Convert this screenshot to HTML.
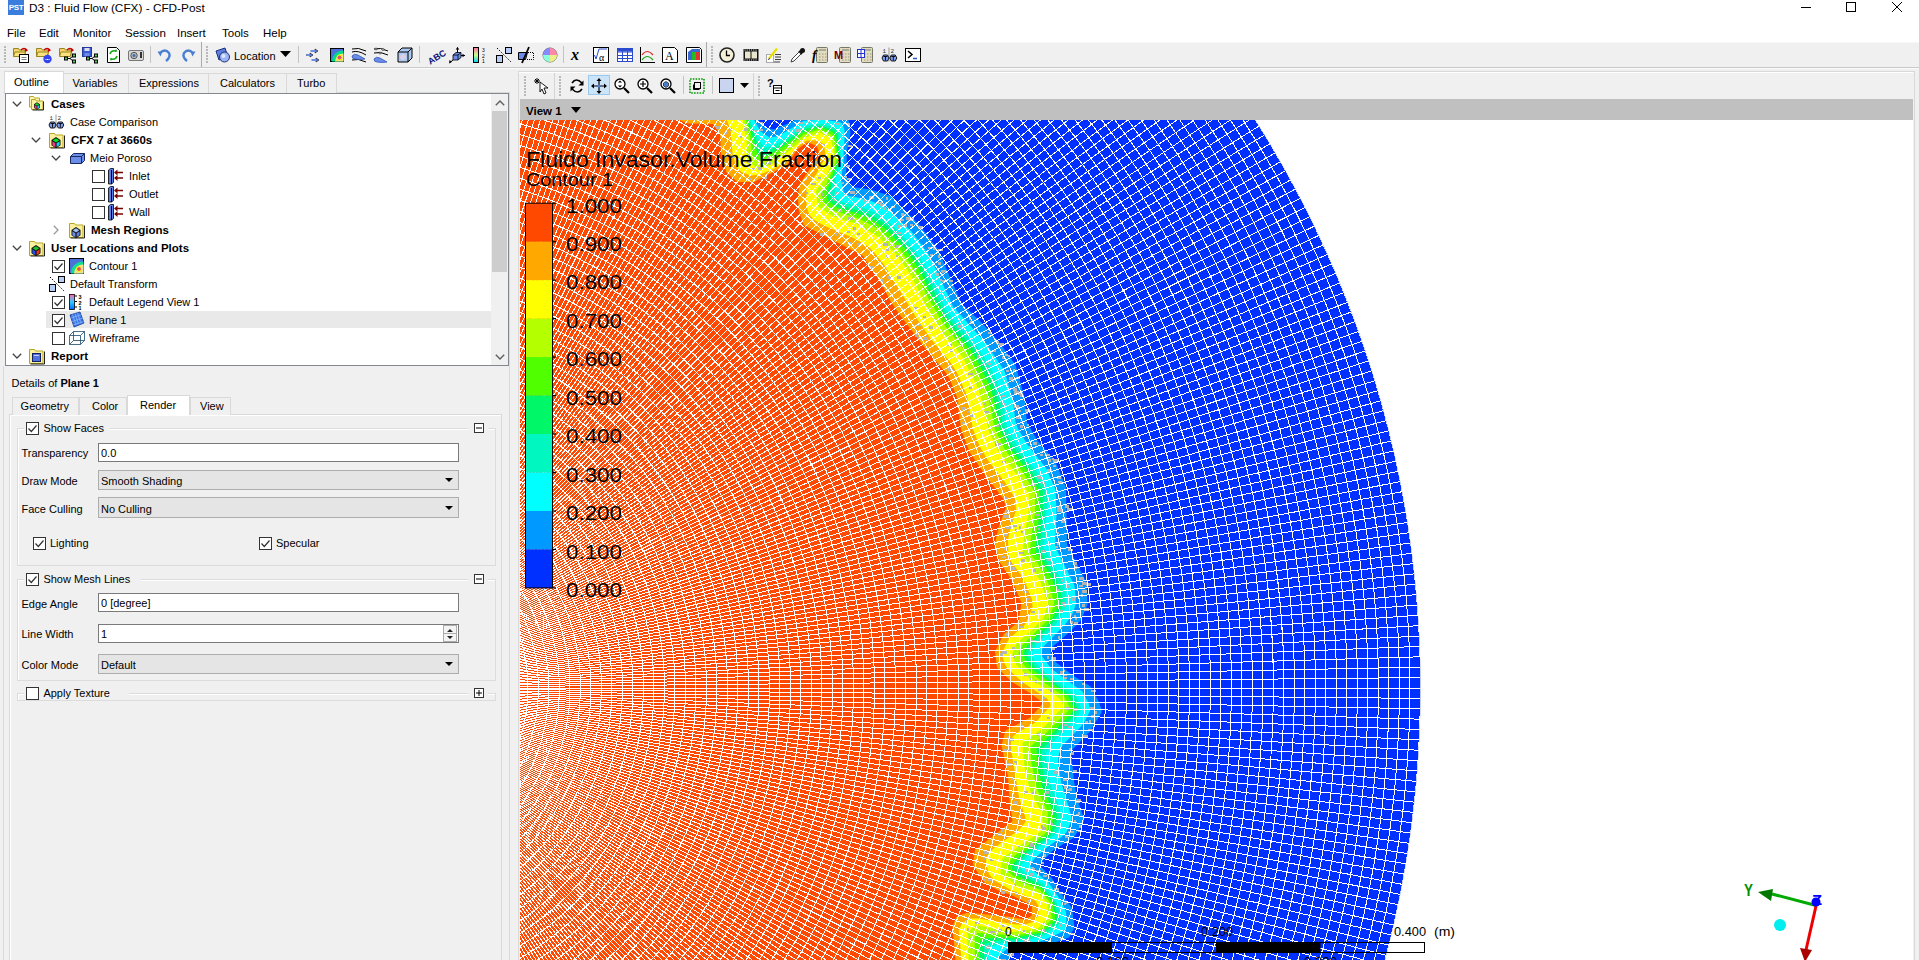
<!DOCTYPE html><html><head><meta charset="utf-8"><style>
html,body{margin:0;padding:0}
body{width:1919px;height:960px;overflow:hidden;position:relative;background:#f0f0f0;font-family:"Liberation Sans",sans-serif;font-size:11px;color:#000}
.t{position:absolute;white-space:nowrap}
</style></head><body>
<div style="position:absolute;left:0;top:0;width:1919px;height:42px;background:#fff"></div>
<div style="position:absolute;left:8px;top:0;width:16px;height:15px;background:#3b7ddd"></div>
<div class="t" style="left:8px;top:3px;width:16px;font-size:8px;line-height:9px;color:#fff;font-weight:bold;text-align:center;letter-spacing:-0.3px">PST</div>
<div class="t" style="left:29px;top:2.8px;font-size:11.8px;line-height:11.8px;font-weight:normal;color:#000;">D3 : Fluid Flow (CFX) - CFD-Post</div>
<svg style="position:absolute;left:1790px;top:0" width="129" height="16"><path d="M11 7.5h10" stroke="#000" stroke-width="1"/><rect x="1846.5" y="2.5" width="9" height="9" fill="none" stroke="#000" transform="translate(-1790,0)"/><path d="M102 2l10 10M112 2l-10 10" stroke="#000" stroke-width="1"/></svg>
<div class="t" style="left:7px;top:28.3px;font-size:11.5px;line-height:11.5px;font-weight:normal;color:#000;">File</div>
<div class="t" style="left:39px;top:28.3px;font-size:11.5px;line-height:11.5px;font-weight:normal;color:#000;">Edit</div>
<div class="t" style="left:73px;top:28.3px;font-size:11.5px;line-height:11.5px;font-weight:normal;color:#000;">Monitor</div>
<div class="t" style="left:125px;top:28.3px;font-size:11.5px;line-height:11.5px;font-weight:normal;color:#000;">Session</div>
<div class="t" style="left:177px;top:28.3px;font-size:11.5px;line-height:11.5px;font-weight:normal;color:#000;">Insert</div>
<div class="t" style="left:222px;top:28.3px;font-size:11.5px;line-height:11.5px;font-weight:normal;color:#000;">Tools</div>
<div class="t" style="left:263px;top:28.3px;font-size:11.5px;line-height:11.5px;font-weight:normal;color:#000;">Help</div>
<div style="position:absolute;left:0;top:42px;width:1919px;height:25px;background:#f0f0f0;border-top:1px solid #f8f8f8"></div>
<div style="position:absolute;left:0;top:67px;width:1919px;height:1px;background:#c9c9c9"></div>
<div style="position:absolute;left:0;top:68px;width:1919px;height:1px;background:#fbfbfb"></div>
<div style="position:absolute;left:4px;top:46px;width:2px;height:2px;background:#b9b9b9"></div><div style="position:absolute;left:4px;top:49px;width:2px;height:2px;background:#b9b9b9"></div><div style="position:absolute;left:4px;top:52px;width:2px;height:2px;background:#b9b9b9"></div><div style="position:absolute;left:4px;top:55px;width:2px;height:2px;background:#b9b9b9"></div><div style="position:absolute;left:4px;top:58px;width:2px;height:2px;background:#b9b9b9"></div><div style="position:absolute;left:4px;top:61px;width:2px;height:2px;background:#b9b9b9"></div><svg style="position:absolute;left:13px;top:47px;overflow:visible" width="16" height="16" viewBox="0 0 16 16"><path d="M0.5 1.5h5l1 1.5h5.5v6h-11.5z" fill="#f3d36b" stroke="#9a8420"/><path d="M0.5 9.5l1.5-4.5h10.5l-1.5 4.5z" fill="#fbe27f" stroke="#9a8420"/><path d="M8 3q3-3 6 0" fill="none" stroke="#c00" stroke-width="1.5"/><path d="M12 1.5l3 2l-3 1.5z" fill="#c00"/><rect x="6.5" y="7.5" width="9" height="8" fill="#fff" stroke="#000"/><path d="M8.5 10.5h5M8.5 12.5h5" stroke="#444" stroke-width="0.7"/></svg><svg style="position:absolute;left:36px;top:47px;overflow:visible" width="16" height="16" viewBox="0 0 16 16"><path d="M0.5 1.5h5l1 1.5h5.5v6h-11.5z" fill="#f3d36b" stroke="#9a8420"/><path d="M0.5 9.5l1.5-4.5h10.5l-1.5 4.5z" fill="#fbe27f" stroke="#9a8420"/><path d="M8 3q3-3 6 0" fill="none" stroke="#c00" stroke-width="1.5"/><path d="M12 1.5l3 2l-3 1.5z" fill="#c00"/><circle cx="11.5" cy="12" r="4.2" fill="#3344ee"/><path d="M9.5 12.5h1M11 12.5h1M12.5 12.5h1" stroke="#fff"/></svg><svg style="position:absolute;left:59px;top:47px;overflow:visible" width="16" height="16" viewBox="0 0 16 16"><path d="M0.5 1.5h5l1 1.5h5.5v6h-11.5z" fill="#f3d36b" stroke="#9a8420"/><path d="M0.5 9.5l1.5-4.5h10.5l-1.5 4.5z" fill="#fbe27f" stroke="#9a8420"/><path d="M8 3q3-3 6 0" fill="none" stroke="#c00" stroke-width="1.5"/><path d="M12 1.5l3 2l-3 1.5z" fill="#c00"/><g transform="translate(5,8)"><path d="M2 3.5h4M6 3.5l3-2.5M6 3.5l3 2.5" stroke="#000" fill="none"/><rect x="0.5" y="2" width="3" height="3" fill="#5c5" stroke="#000"/><rect x="8.5" y="-1" width="3" height="3" fill="#5c5" stroke="#000"/><rect x="8.5" y="5" width="3" height="3" fill="#5c5" stroke="#000"/></g></svg><svg style="position:absolute;left:82px;top:47px;overflow:visible" width="16" height="16" viewBox="0 0 16 16"><rect x="0.5" y="0.5" width="9" height="9" fill="#3b5bd6" stroke="#223a9a"/><rect x="2.5" y="1" width="5" height="3" fill="#dde"/><rect x="2.5" y="6" width="5" height="3.5" fill="#6a8be8"/><g transform="translate(4,8)"><path d="M2 3.5h4M6 3.5l3-2.5M6 3.5l3 2.5" stroke="#000" fill="none"/><rect x="0.5" y="2" width="3" height="3" fill="#5c5" stroke="#000"/><rect x="8.5" y="-1" width="3" height="3" fill="#5c5" stroke="#000"/><rect x="8.5" y="5" width="3" height="3" fill="#5c5" stroke="#000"/></g></svg><svg style="position:absolute;left:106px;top:47px;overflow:visible" width="16" height="16" viewBox="0 0 16 16"><path d="M1.5 0.5h9l3 3v12h-12z" fill="#fff" stroke="#000"/><path d="M4 7q1-4 6-3" fill="none" stroke="#2a2" stroke-width="1.6"/><path d="M10 2l1.5 2.5l-3 .5z" fill="#2a2"/><path d="M11 9q-1 4-6 3" fill="none" stroke="#2a2" stroke-width="1.6"/><path d="M5 14l-1.5-2.5l3-.5z" fill="#2a2"/></svg><svg style="position:absolute;left:128px;top:47px;overflow:visible" width="16" height="16" viewBox="0 0 16 16"><rect x="0.5" y="3.5" width="15" height="10" rx="1.5" fill="#d8d8d8" stroke="#777"/><circle cx="6" cy="8.5" r="3.2" fill="#bbb" stroke="#555"/><circle cx="6" cy="8.5" r="1.5" fill="#3a6ab0"/><rect x="12" y="5" width="2" height="6" fill="#333"/></svg><div style="position:absolute;left:150px;top:46px;width:1px;height:17px;background:#c4c4c4"></div><svg style="position:absolute;left:157px;top:47px;overflow:visible" width="16" height="16" viewBox="0 0 16 16"><path d="M3 6q5-5 9 0q2 4-3 8" fill="none" stroke="#4a7fd4" stroke-width="2.4"/><path d="M0.5 4.5l5 0l-2 5z" fill="#4a7fd4"/></svg><svg style="position:absolute;left:180px;top:47px;overflow:visible" width="16" height="16" viewBox="0 0 16 16"><path d="M13 6q-5-5-9 0q-2 4 3 8" fill="none" stroke="#4a7fd4" stroke-width="2.4"/><path d="M15.5 4.5l-5 0l2 5z" fill="#4a7fd4"/></svg><div style="position:absolute;left:201px;top:42px;width:1px;height:25px;background:#a9a9a9"></div><div style="position:absolute;left:206px;top:46px;width:2px;height:2px;background:#b9b9b9"></div><div style="position:absolute;left:206px;top:49px;width:2px;height:2px;background:#b9b9b9"></div><div style="position:absolute;left:206px;top:52px;width:2px;height:2px;background:#b9b9b9"></div><div style="position:absolute;left:206px;top:55px;width:2px;height:2px;background:#b9b9b9"></div><div style="position:absolute;left:206px;top:58px;width:2px;height:2px;background:#b9b9b9"></div><div style="position:absolute;left:206px;top:61px;width:2px;height:2px;background:#b9b9b9"></div><svg style="position:absolute;left:215px;top:47px;overflow:visible" width="16" height="16" viewBox="0 0 16 16"><path d="M1 4l9-3l3 9l-9 3z" fill="#5c7fe0" stroke="#1a2f80"/><circle cx="9.5" cy="10" r="5" fill="#9ab4f4" stroke="#203070"/><circle cx="8.5" cy="9" r="2" fill="#dde6fb"/></svg><div class="t" style="left:234px;top:50px;font-size:11px;line-height:13px;color:#000">Location</div><svg style="position:absolute;left:280px;top:51px" width="12" height="7"><path d="M0 0h11l-5.5 6z" fill="#000"/></svg><div style="position:absolute;left:298px;top:46px;width:1px;height:17px;background:#c4c4c4"></div><svg style="position:absolute;left:305px;top:47px;overflow:visible" width="16" height="16" viewBox="0 0 16 16"><path d="M1 8h5M6 4h5M7 13h5" stroke="#000" stroke-width="1"/><path d="M5 6l3 2l-3 2zM10 2l3 2l-3 2zM11 11l3 2l-3 2z" fill="#6a8ee8" stroke="#000" stroke-width="0.6"/><path d="M1.5 7h4v2h-4zM5.5 3h5v2h-5zM6.5 12h5v2h-5z" fill="#6a8ee8"/></svg><svg style="position:absolute;left:329px;top:47px;overflow:visible" width="16" height="16" viewBox="0 0 16 16"><rect x="1.5" y="1.5" width="13" height="13" fill="#4a72d8" stroke="#000"/><path d="M3 14.5a11 11 0 0 1 11.5-11v11z" fill="#0d8"/><path d="M6 14.5a8 8 0 0 1 8.5-8v8z" fill="#f0e080"/><circle cx="10.5" cy="10.5" r="2.5" fill="#e05070" stroke="#ff0"/></svg><svg style="position:absolute;left:351px;top:47px;overflow:visible" width="16" height="16" viewBox="0 0 16 16"><path d="M1 2q6-2 14 2M1 13q6-2 14 2M1 5q6-2 14 3" fill="none" stroke="#000"/><path d="M1 9q2-3 6-1l7 4q-5 1-10 0q-3 0-3-3z" fill="#6a8ee8" stroke="#2a4ab0" stroke-width="0.7"/></svg><svg style="position:absolute;left:373px;top:47px;overflow:visible" width="16" height="16" viewBox="0 0 16 16"><path d="M1 2q6-2 14 2M1 6q6-2 14 2" fill="none" stroke="#000"/><circle cx="3" cy="2" r="1" fill="#fff" stroke="#000" stroke-width="0.6"/><circle cx="10" cy="2.5" r="1" fill="#fff" stroke="#000" stroke-width="0.6"/><circle cx="7" cy="6" r="1" fill="#fff" stroke="#000" stroke-width="0.6"/><path d="M1 12q2-3 6-1l7 4q-5 1-10 0q-3 0-3-3z" fill="#6a8ee8" stroke="#2a4ab0" stroke-width="0.7"/></svg><svg style="position:absolute;left:397px;top:47px;overflow:visible" width="16" height="16" viewBox="0 0 16 16"><path d="M1 5l4-4h10v10l-4 4h-10z" fill="#aac8f0" stroke="#000"/><path d="M1 5h10v10M11 5l4-4" fill="none" stroke="#000"/><circle cx="6" cy="10" r="3" fill="#f0d0e0" opacity="0.7"/></svg><div style="position:absolute;left:419px;top:46px;width:1px;height:17px;background:#c4c4c4"></div><svg style="position:absolute;left:425px;top:47px;overflow:visible" width="16" height="16" viewBox="0 0 16 16"><text x="1" y="15" font-family="Liberation Sans" font-weight="bold" font-size="9" fill="#14147a" transform="rotate(-32 8 9)">ABC</text></svg><svg style="position:absolute;left:449px;top:47px;overflow:visible" width="16" height="16" viewBox="0 0 16 16"><path d="M4 8l3-2.5h5v5l-3 2.5h-5z" fill="#6a8ee8" stroke="#000" stroke-width="0.8"/><path d="M4 8h5v5M9 8l3-2.5" fill="none" stroke="#000" stroke-width="0.8"/><path d="M8.5 5.5v-5M12 8.5h4M4 13l-3.5 3" stroke="#000"/><path d="M8.5 0l-1.8 2.5h3.6zM16 8.5l-2.5-1.8v3.6zM0 16l.6-3l2.4 2z" fill="#000"/></svg><svg style="position:absolute;left:472px;top:47px;overflow:visible" width="16" height="16" viewBox="0 0 16 16"><defs><linearGradient id="lg1" x1="0" y1="0" x2="0" y2="1"><stop offset="0" stop-color="#f6a"/><stop offset=".5" stop-color="#cf8"/><stop offset="1" stop-color="#0cf"/></linearGradient></defs><rect x="1.5" y="0.5" width="5" height="15" fill="url(#lg1)" stroke="#000"/><text x="10" y="5" font-size="5" font-family="Liberation Sans">3</text><text x="10" y="10.5" font-size="5" font-family="Liberation Sans">2</text><text x="10" y="16" font-size="5" font-family="Liberation Sans">1</text></svg><svg style="position:absolute;left:496px;top:47px;overflow:visible" width="16" height="16" viewBox="0 0 16 16"><rect x="0.5" y="8.5" width="6" height="7" fill="#b8cdf5" stroke="#000"/><rect x="9.5" y="0.5" width="6" height="6" fill="#b8cdf5" stroke="#000"/><path d="M1 1l14 14" stroke="#000" stroke-dasharray="1.5 1.5"/></svg><svg style="position:absolute;left:518px;top:47px;overflow:visible" width="16" height="16" viewBox="0 0 16 16"><path d="M8 5.5h7.5v7h-7.5" fill="none" stroke="#000" stroke-dasharray="1 1"/><path d="M0.5 5.5h9l-2 7h-7z" fill="#6a8ee8" stroke="#000"/><path d="M11 0l-7 16" stroke="#000" stroke-width="1.8"/></svg><svg style="position:absolute;left:542px;top:47px;overflow:visible" width="16" height="16" viewBox="0 0 16 16"><circle cx="8" cy="8" r="7" fill="#8ed" stroke="#666"/><path d="M8 8L8 1A7 7 0 0 1 15 8z" fill="#f8a"/><path d="M8 8L15 8A7 7 0 0 1 8 15z" fill="#ee8"/><path d="M8 8L8 15A7 7 0 0 1 1 8z" fill="#8fd"/><path d="M8 8L1 8A7 7 0 0 1 8 1z" fill="#88f"/></svg><div style="position:absolute;left:563px;top:46px;width:1px;height:17px;background:#c4c4c4"></div><svg style="position:absolute;left:570px;top:47px;overflow:visible" width="16" height="16" viewBox="0 0 16 16"><text x="1" y="13" font-family="Liberation Serif" font-style="italic" font-weight="bold" font-size="16" fill="#000">x</text></svg><svg style="position:absolute;left:593px;top:47px;overflow:visible" width="16" height="16" viewBox="0 0 16 16"><rect x="0.5" y="0.5" width="15" height="15" fill="#fff" stroke="#000"/><path d="M1.5 8l1.5 4l3-10h8" fill="none" stroke="#2a4ad0"/><text x="6" y="13.5" font-family="Liberation Serif" font-size="10" fill="#000">α</text></svg><svg style="position:absolute;left:617px;top:47px;overflow:visible" width="16" height="16" viewBox="0 0 16 16"><rect x="0.5" y="1.5" width="15" height="13" fill="#fff" stroke="#2a4ad0"/><path d="M0.5 5h15M0.5 8.5h15M0.5 11.5h15M5.5 1.5v13M10.5 1.5v13" stroke="#2a4ad0"/><rect x="0.5" y="1.5" width="15" height="3" fill="#2a4ad0"/></svg><svg style="position:absolute;left:639px;top:47px;overflow:visible" width="16" height="16" viewBox="0 0 16 16"><path d="M1.5 0v15.5h14.5" fill="none" stroke="#000"/><path d="M3 8q5-7 11 0" fill="none" stroke="#d33" stroke-width="1.2"/><path d="M3 13q5-7 11 0" fill="none" stroke="#2a2" stroke-width="1.2"/></svg><svg style="position:absolute;left:662px;top:47px;overflow:visible" width="16" height="16" viewBox="0 0 16 16"><path d="M0.5 0.5h12l3 3v12h-15z" fill="#fff" stroke="#000"/><text x="3" y="13" font-family="Liberation Serif" font-size="12" fill="#000">A</text></svg><svg style="position:absolute;left:686px;top:47px;overflow:visible" width="16" height="16" viewBox="0 0 16 16"><path d="M0.5 0.5h13l2 2v13h-15z" fill="#fff" stroke="#000"/><path d="M2 5l4-3h8v8l-4 3h-8z" fill="#3a6ad0"/><path d="M6 5h8v8h-8z" fill="#2b2"/><path d="M10 5h4v8h-4z" fill="#d33"/></svg><div style="position:absolute;left:706px;top:42px;width:1px;height:25px;background:#a9a9a9"></div><div style="position:absolute;left:711px;top:46px;width:2px;height:2px;background:#b9b9b9"></div><div style="position:absolute;left:711px;top:49px;width:2px;height:2px;background:#b9b9b9"></div><div style="position:absolute;left:711px;top:52px;width:2px;height:2px;background:#b9b9b9"></div><div style="position:absolute;left:711px;top:55px;width:2px;height:2px;background:#b9b9b9"></div><div style="position:absolute;left:711px;top:58px;width:2px;height:2px;background:#b9b9b9"></div><div style="position:absolute;left:711px;top:61px;width:2px;height:2px;background:#b9b9b9"></div><svg style="position:absolute;left:719px;top:47px;overflow:visible" width="16" height="16" viewBox="0 0 16 16"><circle cx="8" cy="8" r="7" fill="#f4efd8" stroke="#222" stroke-width="1.6"/><path d="M7.5 3.5v5h3.5" fill="none" stroke="#000" stroke-width="1.3"/></svg><svg style="position:absolute;left:743px;top:47px;overflow:visible" width="16" height="16" viewBox="0 0 16 16"><rect x="0.5" y="2" width="15" height="12" fill="#111"/><rect x="2" y="4.5" width="5.5" height="7" fill="#e8e6cc"/><rect x="8.5" y="4.5" width="5.5" height="7" fill="#e8e6cc"/><path d="M1.5 3h13M1.5 13h13" stroke="#fff" stroke-dasharray="1 1.2"/></svg><svg style="position:absolute;left:766px;top:47px;overflow:visible" width="16" height="16" viewBox="0 0 16 16"><rect x="0.5" y="7.5" width="7" height="8" fill="#fff" stroke="#aaa"/><path d="M3 11.5l8-10" stroke="#e8e000" stroke-width="2.2"/><path d="M2.5 13l1-2" stroke="#333" stroke-width="1"/><path d="M9 7.5h6M9 10h6M9 12.5h6M8 15h6" stroke="#111" stroke-width="0.8"/></svg><svg style="position:absolute;left:790px;top:47px;overflow:visible" width="16" height="16" viewBox="0 0 16 16"><path d="M1 15l1-3l8-8l2 2l-8 8z" fill="#fff" stroke="#444"/><circle cx="12.5" cy="3.5" r="2.5" fill="#111"/><path d="M9 4l3 3" stroke="#111" stroke-width="2"/></svg><svg style="position:absolute;left:812px;top:47px;overflow:visible" width="16" height="16" viewBox="0 0 16 16"><rect x="4.5" y="0.5" width="11" height="15" rx="1" fill="#e3dbbe" stroke="#776"/><path d="M7 3h7" stroke="#aa9" stroke-width="2"/><path d="M7 7h1.5M10 7h1.5M13 7h1.5M7 10h1.5M10 10h1.5M13 10h1.5M7 13h1.5M10 13h1.5M13 13h1.5" stroke="#998"/><text x="0" y="13" font-family="Liberation Serif" font-style="italic" font-weight="bold" font-size="14" fill="#000">f</text></svg><svg style="position:absolute;left:835px;top:47px;overflow:visible" width="16" height="16" viewBox="0 0 16 16"><rect x="4.5" y="0.5" width="11" height="15" rx="1" fill="#e3dbbe" stroke="#776"/><path d="M7 3h7" stroke="#aa9" stroke-width="2"/><path d="M7 7h1.5M10 7h1.5M13 7h1.5M7 10h1.5M10 10h1.5M13 10h1.5M7 13h1.5M10 13h1.5M13 13h1.5" stroke="#998"/><text x="-1" y="12" font-family="Liberation Sans" font-weight="bold" font-size="11" fill="#700">M</text></svg><svg style="position:absolute;left:857px;top:47px;overflow:visible" width="16" height="16" viewBox="0 0 16 16"><rect x="4.5" y="0.5" width="11" height="15" rx="1" fill="#e3dbbe" stroke="#776"/><path d="M7 3h7" stroke="#aa9" stroke-width="2"/><path d="M7 7h1.5M10 7h1.5M13 7h1.5M7 10h1.5M10 10h1.5M13 10h1.5M7 13h1.5M10 13h1.5M13 13h1.5" stroke="#998"/><rect x="0.5" y="2.5" width="7" height="8" fill="#fff" stroke="#2233cc"/><path d="M0.5 6.5h7M4 2.5v8" stroke="#2233cc"/></svg><svg style="position:absolute;left:881px;top:47px;overflow:visible" width="16" height="16" viewBox="0 0 16 16"><text x="1.5" y="5.5" font-size="6" font-family="Liberation Mono" fill="#333">1</text><text x="9.5" y="5.5" font-size="6" font-family="Liberation Mono" fill="#333">2</text><path d="M8 0.5v14" stroke="#999"/><path d="M1 11l1.5-3h4l1.5 3l-1.5 3h-4z" fill="#7fa0f0" stroke="#000" stroke-width="0.9"/><path d="M8.8 11l1.5-3h4l1.5 3l-1.5 3h-4z" fill="#7fa0f0" stroke="#000" stroke-width="0.9"/><path d="M2.5 9.5h4M4.5 9.5v4M10.3 9.5h4M12.3 9.5v4" stroke="#000" stroke-width="0.9"/></svg><svg style="position:absolute;left:905px;top:47px;overflow:visible" width="16" height="16" viewBox="0 0 16 16"><rect x="0.5" y="1.5" width="15" height="13" fill="#fff" stroke="#000"/><path d="M3 4l4 3.5l-4 3.5" fill="none" stroke="#000" stroke-width="1.5"/><path d="M8 11.5h4" stroke="#2a5ad0" stroke-width="1.5"/></svg>
<div style="position:absolute;left:3px;top:92px;width:506px;height:1px;background:#d9d9d9"></div>
<div style="position:absolute;left:4px;top:71px;width:57.5px;height:22px;background:#fff;border:1px solid #d9d9d9;border-bottom:none"></div>
<div class="t" style="left:14px;top:76.7px;font-size:11px;line-height:11px;font-weight:normal;color:#000;">Outline</div>
<div style="position:absolute;left:62.5px;top:73px;width:64.0px;height:19px;background:#f0f0f0;border:1px solid #d9d9d9;border-bottom:none"></div>
<div class="t" style="left:72.5px;top:77.7px;font-size:11px;line-height:11px;font-weight:normal;color:#000;">Variables</div>
<div style="position:absolute;left:127.5px;top:73px;width:79.5px;height:19px;background:#f0f0f0;border:1px solid #d9d9d9;border-bottom:none"></div>
<div class="t" style="left:139px;top:77.7px;font-size:11px;line-height:11px;font-weight:normal;color:#000;">Expressions</div>
<div style="position:absolute;left:208px;top:73px;width:76.5px;height:19px;background:#f0f0f0;border:1px solid #d9d9d9;border-bottom:none"></div>
<div class="t" style="left:220px;top:77.7px;font-size:11px;line-height:11px;font-weight:normal;color:#000;">Calculators</div>
<div style="position:absolute;left:285.5px;top:73px;width:49.0px;height:19px;background:#f0f0f0;border:1px solid #d9d9d9;border-bottom:none"></div>
<div class="t" style="left:297px;top:77.7px;font-size:11px;line-height:11px;font-weight:normal;color:#000;">Turbo</div>
<div style="position:absolute;left:5px;top:93px;width:502px;height:271px;background:#fff;border:1px solid #828790"></div>
<div style="position:absolute;left:46px;top:311px;width:445px;height:17px;background:#e9e9e9"></div><svg style="position:absolute;left:12px;top:101px" width="10" height="6"><path d="M0.8 0.8l4.2 4.2l4.2-4.2" fill="none" stroke="#444" stroke-width="1.3"/></svg><svg style="position:absolute;left:29px;top:96px;overflow:visible" width="16" height="16" viewBox="0 0 16 16"><path d="M0.5 0.5h4l1 1.5h5v9h-10z" fill="#fdf6b8" stroke="#b5a820"/><path d="M2.5 3.5h4l1 1.5h6.5v8.5h-11.5z" fill="#fbefa0" stroke="#b5a820"/><path d="M14.5 5.5v8.5h-11" fill="none" stroke="#222"/><g transform="translate(5,6.2) scale(1.0)"><path d="M0 2l3-2l3 2v3.5l-3 2l-3-2z" fill="#111"/><path d="M0.8 2.2l2.2-1.4l2.2 1.4l-2.2 1.4z" fill="#00e020"/><path d="M0.6 2.8l2 1.3v2.7l-2-1.3z" fill="#f04080"/><path d="M3.4 4.1l2-1.3v2.6l-2 1.3z" fill="#20d0f0"/></g></svg><div class="t" style="left:51px;top:99.3px;font-size:11.5px;line-height:11.5px;font-weight:bold;color:#000">Cases</div><svg style="position:absolute;left:48px;top:114px;overflow:visible" width="16" height="16" viewBox="0 0 16 16"><text x="1.5" y="5.5" font-size="6" font-family="Liberation Mono" fill="#333">1</text><text x="9.5" y="5.5" font-size="6" font-family="Liberation Mono" fill="#333">2</text><path d="M8 0.5v14" stroke="#999"/><path d="M1 11l1.5-3h4l1.5 3l-1.5 3h-4z" fill="#7fa0f0" stroke="#000" stroke-width="0.9"/><path d="M8.8 11l1.5-3h4l1.5 3l-1.5 3h-4z" fill="#7fa0f0" stroke="#000" stroke-width="0.9"/><path d="M2.5 9.5h4M4.5 9.5v4M10.3 9.5h4M12.3 9.5v4" stroke="#000" stroke-width="0.9"/></svg><div class="t" style="left:70px;top:116.7px;font-size:11px;line-height:11px;font-weight:normal;color:#000">Case Comparison</div><svg style="position:absolute;left:31px;top:137px" width="10" height="6"><path d="M0.8 0.8l4.2 4.2l4.2-4.2" fill="none" stroke="#444" stroke-width="1.3"/></svg><svg style="position:absolute;left:49px;top:132px;overflow:visible" width="16" height="16" viewBox="0 0 16 16"><path d="M0.5 1.5h5l1 1.5h7.5v12.5h-13.5z" fill="#fbefa0" stroke="#b5a820"/><path d="M15.5 3.5v12.5h-14" fill="none" stroke="#222"/><g transform="translate(2.5,5) scale(1.5)"><path d="M0 2l3-2l3 2v3.5l-3 2l-3-2z" fill="#111"/><path d="M0.8 2.2l2.2-1.4l2.2 1.4l-2.2 1.4z" fill="#00e020"/><path d="M0.6 2.8l2 1.3v2.7l-2-1.3z" fill="#f04080"/><path d="M3.4 4.1l2-1.3v2.6l-2 1.3z" fill="#20d0f0"/></g></svg><div class="t" style="left:71px;top:135.3px;font-size:11.5px;line-height:11.5px;font-weight:bold;color:#000">CFX 7 at 3660s</div><svg style="position:absolute;left:51px;top:155px" width="10" height="6"><path d="M0.8 0.8l4.2 4.2l4.2-4.2" fill="none" stroke="#444" stroke-width="1.3"/></svg><svg style="position:absolute;left:70px;top:150px;overflow:visible" width="16" height="16" viewBox="0 0 16 16"><path d="M0.5 6.5l3-3h11v7l-3 3h-11z" fill="#6a8ee8" stroke="#1a2a60"/><path d="M0.5 6.5h11v7M11.5 6.5l3-3" fill="none" stroke="#1a2a60"/></svg><div class="t" style="left:90px;top:152.7px;font-size:11px;line-height:11px;font-weight:normal;color:#000">Meio Poroso</div><div style="position:absolute;left:92px;top:169.5px;width:13px;height:13px;box-sizing:border-box;border:1px solid #333;background:#fff"></div><svg style="position:absolute;left:108px;top:168px;overflow:visible" width="16" height="16" viewBox="0 0 16 16"><path d="M0.5 2l2-1.5h3v14l-2 1.5h-3z" fill="#5a80e8" stroke="#000" stroke-width="0.8"/><path d="M3.5 2v14" stroke="#000" stroke-width="1"/><path d="M8 4.5h7M8 10h7" stroke="#700" stroke-width="1.4"/><path d="M6 4.5l3.5-3v6zM6 10l3.5-3v6z" fill="#700"/></svg><div class="t" style="left:129px;top:170.7px;font-size:11px;line-height:11px;font-weight:normal;color:#000">Inlet</div><div style="position:absolute;left:92px;top:187.5px;width:13px;height:13px;box-sizing:border-box;border:1px solid #333;background:#fff"></div><svg style="position:absolute;left:108px;top:186px;overflow:visible" width="16" height="16" viewBox="0 0 16 16"><path d="M0.5 2l2-1.5h3v14l-2 1.5h-3z" fill="#5a80e8" stroke="#000" stroke-width="0.8"/><path d="M3.5 2v14" stroke="#000" stroke-width="1"/><path d="M8 4.5h7M8 10h7" stroke="#700" stroke-width="1.4"/><path d="M6 4.5l3.5-3v6zM6 10l3.5-3v6z" fill="#700"/></svg><div class="t" style="left:129px;top:188.7px;font-size:11px;line-height:11px;font-weight:normal;color:#000">Outlet</div><div style="position:absolute;left:92px;top:205.5px;width:13px;height:13px;box-sizing:border-box;border:1px solid #333;background:#fff"></div><svg style="position:absolute;left:108px;top:204px;overflow:visible" width="16" height="16" viewBox="0 0 16 16"><path d="M0.5 2l2-1.5h3v14l-2 1.5h-3z" fill="#5a80e8" stroke="#000" stroke-width="0.8"/><path d="M3.5 2v14" stroke="#000" stroke-width="1"/><path d="M8 4.5h7M8 10h7" stroke="#700" stroke-width="1.4"/><path d="M6 4.5l3.5-3v6zM6 10l3.5-3v6z" fill="#700"/></svg><div class="t" style="left:129px;top:206.7px;font-size:11px;line-height:11px;font-weight:normal;color:#000">Wall</div><svg style="position:absolute;left:53px;top:225px" width="6" height="10"><path d="M0.8 0.8l4.2 4.2l-4.2 4.2" fill="none" stroke="#999" stroke-width="1.3"/></svg><svg style="position:absolute;left:69px;top:222px;overflow:visible" width="16" height="16" viewBox="0 0 16 16"><path d="M0.5 1.5h5l1 1.5h7.5v12.5h-13.5z" fill="#fbefa0" stroke="#b5a820"/><path d="M15.5 3.5v12.5h-14" fill="none" stroke="#222"/><g transform="translate(2.5,5) scale(1.5)"><path d="M0 2l3-2l3 2v3.5l-3 2l-3-2z" fill="#111"/><path d="M0.8 2.2l2.2-1.4l2.2 1.4l-2.2 1.4z" fill="#a0c0f8"/><path d="M0.6 2.8l2 1.3v2.7l-2-1.3z" fill="#7090e8"/><path d="M3.4 4.1l2-1.3v2.6l-2 1.3z" fill="#6080e0"/></g></svg><div class="t" style="left:91px;top:225.3px;font-size:11.5px;line-height:11.5px;font-weight:bold;color:#000">Mesh Regions</div><svg style="position:absolute;left:12px;top:245px" width="10" height="6"><path d="M0.8 0.8l4.2 4.2l4.2-4.2" fill="none" stroke="#444" stroke-width="1.3"/></svg><svg style="position:absolute;left:29px;top:240px;overflow:visible" width="16" height="16" viewBox="0 0 16 16"><path d="M0.5 1.5h5l1 1.5h7.5v12.5h-13.5z" fill="#fbefa0" stroke="#b5a820"/><path d="M15.5 3.5v12.5h-14" fill="none" stroke="#222"/><g transform="translate(2.5,5) scale(1.5)"><path d="M0 2l3-2l3 2v3.5l-3 2l-3-2z" fill="#111"/><path d="M0.8 2.2l2.2-1.4l2.2 1.4l-2.2 1.4z" fill="#20c020"/><path d="M0.6 2.8l2 1.3v2.7l-2-1.3z" fill="#2050f0"/><path d="M3.4 4.1l2-1.3v2.6l-2 1.3z" fill="#f03020"/></g></svg><div class="t" style="left:51px;top:243.3px;font-size:11.5px;line-height:11.5px;font-weight:bold;color:#000">User Locations and Plots</div><div style="position:absolute;left:52px;top:259.5px;width:13px;height:13px;box-sizing:border-box;border:1px solid #333;background:#fff"></div><svg style="position:absolute;left:52px;top:259.5px" width="13" height="13"><path d="M2.5 6.5l2.8 3l5.2-6" fill="none" stroke="#333" stroke-width="1.2"/></svg><svg style="position:absolute;left:69px;top:258px;overflow:visible" width="16" height="16" viewBox="0 0 16 16"><rect x="0.5" y="0.5" width="14" height="15" fill="#4a72d8" stroke="#000"/><path d="M2 15.5a12 12 0 0 1 12.5-12v12z" fill="#1d9"/><path d="M5 15.5a9 9 0 0 1 9.5-9v9z" fill="#f0e090"/><circle cx="10" cy="11" r="2.5" fill="#e05070" stroke="#ff0"/></svg><div class="t" style="left:89px;top:260.7px;font-size:11px;line-height:11px;font-weight:normal;color:#000">Contour 1</div><svg style="position:absolute;left:49px;top:276px;overflow:visible" width="16" height="16" viewBox="0 0 16 16"><rect x="0.5" y="8.5" width="6" height="7" fill="#b8cdf5" stroke="#000"/><rect x="9.5" y="0.5" width="6" height="6" fill="#b8cdf5" stroke="#000"/><path d="M1 1l14 14" stroke="#000" stroke-dasharray="1.5 1.5"/></svg><div class="t" style="left:70px;top:278.7px;font-size:11px;line-height:11px;font-weight:normal;color:#000">Default Transform</div><div style="position:absolute;left:52px;top:295.5px;width:13px;height:13px;box-sizing:border-box;border:1px solid #333;background:#fff"></div><svg style="position:absolute;left:52px;top:295.5px" width="13" height="13"><path d="M2.5 6.5l2.8 3l5.2-6" fill="none" stroke="#333" stroke-width="1.2"/></svg><svg style="position:absolute;left:69px;top:294px;overflow:visible" width="16" height="16" viewBox="0 0 16 16"><defs><linearGradient id="lg2" x1="0" y1="0" x2="0" y2="1"><stop offset="0" stop-color="#f6a"/><stop offset=".5" stop-color="#3cf"/><stop offset="1" stop-color="#06f"/></linearGradient></defs><rect x="0.5" y="0.5" width="5" height="15" fill="url(#lg2)" stroke="#000" stroke-width="0.8"/><text x="9.5" y="5" font-size="5.5" font-family="Liberation Sans" font-weight="bold">3</text><text x="9.5" y="10.5" font-size="5.5" font-family="Liberation Sans" font-weight="bold">2</text><text x="9.5" y="16" font-size="5.5" font-family="Liberation Sans" font-weight="bold">1</text><path d="M6 2h2M6 7.5h2M6 13h2" stroke="#000"/></svg><div class="t" style="left:89px;top:296.7px;font-size:11px;line-height:11px;font-weight:normal;color:#000">Default Legend View 1</div><div style="position:absolute;left:52px;top:313.5px;width:13px;height:13px;box-sizing:border-box;border:1px solid #333;background:#fff"></div><svg style="position:absolute;left:52px;top:313.5px" width="13" height="13"><path d="M2.5 6.5l2.8 3l5.2-6" fill="none" stroke="#333" stroke-width="1.2"/></svg><svg style="position:absolute;left:69px;top:312px;overflow:visible" width="16" height="16" viewBox="0 0 16 16"><path d="M1 3l10-3l4 11l-10 4z" fill="#3d7ae8" stroke="#123a90" stroke-width="0.8"/><path d="M3.5 2.3l3.5 10.5M6 1.5l3.5 10.5M8.5 0.8l3.5 10.5M1.8 6l11-3.5M3 9.5l11-3.5M4 13l11-3.5" stroke="#9ec0ff" stroke-width="0.6"/></svg><div class="t" style="left:89px;top:314.7px;font-size:11px;line-height:11px;font-weight:normal;color:#000">Plane 1</div><div style="position:absolute;left:52px;top:331.5px;width:13px;height:13px;box-sizing:border-box;border:1px solid #333;background:#fff"></div><svg style="position:absolute;left:69px;top:330px;overflow:visible" width="16" height="16" viewBox="0 0 16 16"><path d="M0.5 5.5l4-4h11v9l-4 4h-11z" fill="#fff" stroke="#1a4a6a" stroke-width="0.8"/><path d="M0.5 5.5h11v9M11.5 5.5l4-4M4.5 1.5v9h11M4.5 10.5l-4 4" fill="none" stroke="#1a4a6a" stroke-width="0.8"/></svg><div class="t" style="left:89px;top:332.7px;font-size:11px;line-height:11px;font-weight:normal;color:#000">Wireframe</div><svg style="position:absolute;left:12px;top:353px" width="10" height="6"><path d="M0.8 0.8l4.2 4.2l4.2-4.2" fill="none" stroke="#444" stroke-width="1.3"/></svg><svg style="position:absolute;left:29px;top:348px;overflow:visible" width="16" height="16" viewBox="0 0 16 16"><path d="M0.5 1.5h5l1 1.5h7.5v12.5h-13.5z" fill="#fbefa0" stroke="#b5a820"/><path d="M15.5 3.5v12.5h-14" fill="none" stroke="#222"/><rect x="3.5" y="5.5" width="8" height="8" fill="#5070e0" stroke="#102060"/><path d="M5 7.5h5" stroke="#c0d0ff"/></svg><div class="t" style="left:51px;top:351.3px;font-size:11.5px;line-height:11.5px;font-weight:bold;color:#000">Report</div><div style="position:absolute;left:491px;top:94px;width:17px;height:271px;background:#f0f0f0"></div><div style="position:absolute;left:492px;top:111px;width:15px;height:161px;background:#cdcdcd"></div><svg style="position:absolute;left:495px;top:100px" width="10" height="6"><path d="M0.8 5.2l4.2-4.2l4.2 4.2" fill="none" stroke="#606060" stroke-width="1.4"/></svg><svg style="position:absolute;left:495px;top:354px" width="10" height="6"><path d="M0.8 0.8l4.2 4.2l4.2-4.2" fill="none" stroke="#606060" stroke-width="1.4"/></svg>
<div class="t" style="left:11.5px;top:377.7px;font-size:11px;line-height:11px;font-weight:normal;color:#000">Details of <b>Plane 1</b></div><div style="position:absolute;left:9px;top:414px;width:493px;height:560px;box-sizing:border-box;border:1px solid #d9d9d9;background:#f0f0f0"></div><div style="position:absolute;left:10px;top:415px;width:491px;height:1px;background:#fff"></div><div style="position:absolute;left:10px;top:415px;width:1px;height:545px;background:#fff"></div><div style="position:absolute;left:11.5px;top:396.5px;width:67.7px;height:18px;box-sizing:border-box;background:#f0f0f0;border:1px solid #d9d9d9;border-bottom:none"></div><div class="t" style="left:20.6px;top:400.7px;font-size:11px;line-height:11px;font-weight:normal;color:#000">Geometry</div><div style="position:absolute;left:79.2px;top:396.5px;width:47.8px;height:18px;box-sizing:border-box;background:#f0f0f0;border:1px solid #d9d9d9;border-bottom:none"></div><div class="t" style="left:92px;top:400.7px;font-size:11px;line-height:11px;font-weight:normal;color:#000">Color</div><div style="position:absolute;left:127px;top:394.5px;width:62.5px;height:20.5px;box-sizing:border-box;background:#fff;border:1px solid #d9d9d9;border-bottom:none"></div><div class="t" style="left:140px;top:399.7px;font-size:11px;line-height:11px;font-weight:normal;color:#000">Render</div><div style="position:absolute;left:189.5px;top:396.5px;width:41.7px;height:18px;box-sizing:border-box;background:#f0f0f0;border:1px solid #d9d9d9;border-bottom:none"></div><div class="t" style="left:200px;top:400.7px;font-size:11px;line-height:11px;font-weight:normal;color:#000">View</div><div style="position:absolute;left:16.5px;top:427.5px;width:479px;height:138.5px;box-sizing:border-box;border:1px solid #dcdcdc;border-top-color:#dcdcdc"></div><div style="position:absolute;left:17.5px;top:428.5px;width:477px;height:136.5px;box-sizing:border-box;border:1px solid #fff;border-right:none;border-bottom:none"></div><div style="position:absolute;left:24px;top:421.5px;width:86px;height:12px;background:#f0f0f0"></div><div style="position:absolute;left:468px;top:421.5px;width:20px;height:12px;background:#f0f0f0"></div><div style="position:absolute;left:26px;top:421.5px;width:13px;height:13px;box-sizing:border-box;border:1px solid #333;background:#fff"></div><svg style="position:absolute;left:26px;top:421.5px" width="13" height="13"><path d="M2.5 6.5l2.8 3l5.2-6" fill="none" stroke="#333" stroke-width="1.2"/></svg><div class="t" style="left:43.4px;top:422.5px;font-size:11px;line-height:11px;font-weight:normal;color:#000">Show Faces</div><svg style="position:absolute;left:473.5px;top:423.0px" width="10" height="10"><rect x="0.5" y="0.5" width="9" height="9" fill="#fff" stroke="#333"/><path d="M2 5h6" stroke="#000"/></svg><div style="position:absolute;left:16.5px;top:578.6px;width:479px;height:102.39999999999998px;box-sizing:border-box;border:1px solid #dcdcdc;border-top-color:#dcdcdc"></div><div style="position:absolute;left:17.5px;top:579.6px;width:477px;height:100.39999999999998px;box-sizing:border-box;border:1px solid #fff;border-right:none;border-bottom:none"></div><div style="position:absolute;left:24px;top:572.6px;width:117px;height:12px;background:#f0f0f0"></div><div style="position:absolute;left:468px;top:572.6px;width:20px;height:12px;background:#f0f0f0"></div><div style="position:absolute;left:26px;top:572.6px;width:13px;height:13px;box-sizing:border-box;border:1px solid #333;background:#fff"></div><svg style="position:absolute;left:26px;top:572.6px" width="13" height="13"><path d="M2.5 6.5l2.8 3l5.2-6" fill="none" stroke="#333" stroke-width="1.2"/></svg><div class="t" style="left:43.4px;top:573.6px;font-size:11px;line-height:11px;font-weight:normal;color:#000">Show Mesh Lines</div><svg style="position:absolute;left:473.5px;top:574.1px" width="10" height="10"><rect x="0.5" y="0.5" width="9" height="9" fill="#fff" stroke="#333"/><path d="M2 5h6" stroke="#000"/></svg><div style="position:absolute;left:16.5px;top:692.6px;width:479px;height:8.899999999999977px;box-sizing:border-box;border:1px solid #dcdcdc;border-top-color:#dcdcdc"></div><div style="position:absolute;left:17.5px;top:693.6px;width:477px;height:6.899999999999977px;box-sizing:border-box;border:1px solid #fff;border-right:none;border-bottom:none"></div><div style="position:absolute;left:24px;top:686.6px;width:105px;height:12px;background:#f0f0f0"></div><div style="position:absolute;left:468px;top:686.6px;width:20px;height:12px;background:#f0f0f0"></div><div style="position:absolute;left:26px;top:686.6px;width:13px;height:13px;box-sizing:border-box;border:1px solid #333;background:#fff"></div><div class="t" style="left:43.4px;top:687.6px;font-size:11px;line-height:11px;font-weight:normal;color:#000">Apply Texture</div><svg style="position:absolute;left:473.5px;top:688.1px" width="10" height="10"><rect x="0.5" y="0.5" width="9" height="9" fill="#fff" stroke="#333"/><path d="M2 5h6M5 2v6" stroke="#000"/></svg><div class="t" style="left:21.5px;top:447.7px;font-size:11px;line-height:11px;font-weight:normal;color:#000">Transparency</div><div style="position:absolute;left:98px;top:442.5px;width:361px;height:19px;box-sizing:border-box;border:1px solid #7a7a7a;background:#fff"></div><div class="t" style="left:101px;top:447.7px;font-size:11px;line-height:11px;font-weight:normal;color:#000">0.0</div><div class="t" style="left:21.5px;top:475.7px;font-size:11px;line-height:11px;font-weight:normal;color:#000">Draw Mode</div><div style="position:absolute;left:98px;top:469.5px;width:361px;height:20.5px;box-sizing:border-box;border:1px solid #adadad;background:#e5e5e5"></div><div class="t" style="left:101px;top:475.9px;font-size:11px;line-height:11px;font-weight:normal;color:#000">Smooth Shading</div><svg style="position:absolute;left:445px;top:477.75px" width="9" height="5"><path d="M0 0h8l-4 4z" fill="#000"/></svg><div class="t" style="left:21.5px;top:503.7px;font-size:11px;line-height:11px;font-weight:normal;color:#000">Face Culling</div><div style="position:absolute;left:98px;top:497px;width:361px;height:21px;box-sizing:border-box;border:1px solid #adadad;background:#e5e5e5"></div><div class="t" style="left:101px;top:503.7px;font-size:11px;line-height:11px;font-weight:normal;color:#000">No Culling</div><svg style="position:absolute;left:445px;top:505.5px" width="9" height="5"><path d="M0 0h8l-4 4z" fill="#000"/></svg><div style="position:absolute;left:33px;top:536.5px;width:13px;height:13px;box-sizing:border-box;border:1px solid #333;background:#fff"></div><svg style="position:absolute;left:33px;top:536.5px" width="13" height="13"><path d="M2.5 6.5l2.8 3l5.2-6" fill="none" stroke="#333" stroke-width="1.2"/></svg><div class="t" style="left:50px;top:538.2px;font-size:11px;line-height:11px;font-weight:normal;color:#000">Lighting</div><div style="position:absolute;left:259px;top:536.5px;width:13px;height:13px;box-sizing:border-box;border:1px solid #333;background:#fff"></div><svg style="position:absolute;left:259px;top:536.5px" width="13" height="13"><path d="M2.5 6.5l2.8 3l5.2-6" fill="none" stroke="#333" stroke-width="1.2"/></svg><div class="t" style="left:276px;top:538.2px;font-size:11px;line-height:11px;font-weight:normal;color:#000">Specular</div><div class="t" style="left:21.5px;top:598.7px;font-size:11px;line-height:11px;font-weight:normal;color:#000">Edge Angle</div><div style="position:absolute;left:98px;top:593px;width:361px;height:19px;box-sizing:border-box;border:1px solid #7a7a7a;background:#fff"></div><div class="t" style="left:101px;top:598.2px;font-size:11px;line-height:11px;font-weight:normal;color:#000">0 [degree]</div><div class="t" style="left:21.5px;top:628.7px;font-size:11px;line-height:11px;font-weight:normal;color:#000">Line Width</div><div style="position:absolute;left:98px;top:623.5px;width:361px;height:19px;box-sizing:border-box;border:1px solid #7a7a7a;background:#fff"></div><div class="t" style="left:101px;top:628.7px;font-size:11px;line-height:11px;font-weight:normal;color:#000">1</div><svg style="position:absolute;left:442px;top:624.5px" width="16" height="17"><rect x="1.5" y="0.5" width="13" height="16" fill="#f4f4f4" stroke="#adadad"/><path d="M1.5 8.5h13" stroke="#adadad"/><path d="M5 7h6l-3-3z M5 11h6l-3 3z" fill="#222"/></svg><div class="t" style="left:21.5px;top:659.7px;font-size:11px;line-height:11px;font-weight:normal;color:#000">Color Mode</div><div style="position:absolute;left:98px;top:653.5px;width:361px;height:20.5px;box-sizing:border-box;border:1px solid #adadad;background:#e5e5e5"></div><div class="t" style="left:101px;top:659.9px;font-size:11px;line-height:11px;font-weight:normal;color:#000">Default</div><svg style="position:absolute;left:445px;top:661.75px" width="9" height="5"><path d="M0 0h8l-4 4z" fill="#000"/></svg><div style="position:absolute;left:3px;top:366px;width:1px;height:594px;background:#d9d9d9"></div>
<div style="position:absolute;left:509px;top:92px;width:1px;height:868px;background:#d9d9d9"></div>
<div style="position:absolute;left:518px;top:71px;width:1395px;height:889px;border:1px solid #d9d9d9;border-bottom:none;background:#f0f0f0"></div>
<div style="position:absolute;left:519px;top:72px;width:1394px;height:1px;background:#fff"></div>
<div style="position:absolute;left:524px;top:76px;width:2px;height:2px;background:#b9b9b9"></div><div style="position:absolute;left:524px;top:79px;width:2px;height:2px;background:#b9b9b9"></div><div style="position:absolute;left:524px;top:82px;width:2px;height:2px;background:#b9b9b9"></div><div style="position:absolute;left:524px;top:85px;width:2px;height:2px;background:#b9b9b9"></div><div style="position:absolute;left:524px;top:88px;width:2px;height:2px;background:#b9b9b9"></div><div style="position:absolute;left:524px;top:91px;width:2px;height:2px;background:#b9b9b9"></div><div style="position:absolute;left:524px;top:94px;width:2px;height:2px;background:#b9b9b9"></div><svg style="position:absolute;left:534px;top:78px;overflow:visible" width="16" height="16" viewBox="0 0 16 16"><path d="M6 4l8 6h-4l2 5l-2 1l-2-5l-2 3z" fill="#fff" stroke="#000" stroke-width="0.9"/><path d="M3 0v6M0 3h6M1 1l4 4M5 1l-4 4" stroke="#000"/></svg><div style="position:absolute;left:554px;top:73px;width:1px;height:26px;background:#d4d4d4"></div><div style="position:absolute;left:559px;top:76px;width:2px;height:2px;background:#b9b9b9"></div><div style="position:absolute;left:559px;top:79px;width:2px;height:2px;background:#b9b9b9"></div><div style="position:absolute;left:559px;top:82px;width:2px;height:2px;background:#b9b9b9"></div><div style="position:absolute;left:559px;top:85px;width:2px;height:2px;background:#b9b9b9"></div><div style="position:absolute;left:559px;top:88px;width:2px;height:2px;background:#b9b9b9"></div><div style="position:absolute;left:559px;top:91px;width:2px;height:2px;background:#b9b9b9"></div><div style="position:absolute;left:559px;top:94px;width:2px;height:2px;background:#b9b9b9"></div><svg style="position:absolute;left:569px;top:78px;overflow:visible" width="16" height="16" viewBox="0 0 16 16"><path d="M3 5q4-6 10 0" fill="none" stroke="#000" stroke-width="1.6"/><path d="M13 11q-4 6-10 0" fill="none" stroke="#000" stroke-width="1.6"/><path d="M14.5 2.5v5h-5z" fill="#000"/><path d="M1.5 13.5v-5h5z" fill="#000"/></svg><div style="position:absolute;left:588px;top:75px;width:22px;height:20px;background:#cce4f7;border:1px solid #99c9ef;box-sizing:border-box"></div><svg style="position:absolute;left:591px;top:78px;overflow:visible" width="16" height="16" viewBox="0 0 16 16"><path d="M8 1v14M1 8h14" stroke="#000" stroke-width="1.2"/><path d="M8 0l-2.5 3h5zM8 16l-2.5-3h5zM0 8l3-2.5v5zM16 8l-3-2.5v5z" fill="#000"/><circle cx="8" cy="8" r="1.5" fill="#4a7fd4"/></svg><svg style="position:absolute;left:614px;top:78px;overflow:visible" width="16" height="16" viewBox="0 0 16 16"><circle cx="6" cy="6" r="5" fill="#fff" stroke="#000" stroke-width="1.3"/><path d="M10 10l5 5" stroke="#000" stroke-width="2.2"/><path d="M6 2.5l-2 2h4zM6 9.5l-2-2h4z" fill="#000"/></svg><svg style="position:absolute;left:637px;top:78px;overflow:visible" width="16" height="16" viewBox="0 0 16 16"><circle cx="6" cy="6" r="5" fill="#fff" stroke="#000" stroke-width="1.3"/><path d="M10 10l5 5" stroke="#000" stroke-width="2.2"/><path d="M3 6h6M6 3v6" stroke="#000" stroke-width="1.2"/></svg><svg style="position:absolute;left:660px;top:78px;overflow:visible" width="16" height="16" viewBox="0 0 16 16"><circle cx="6" cy="6" r="5" fill="#fff" stroke="#000" stroke-width="1.3"/><path d="M10 10l5 5" stroke="#000" stroke-width="2.2"/><path d="M3.5 5l2.5-1.5l2.5 1.5v3l-2.5 1.5l-2.5-1.5z" fill="#4a7fd4" stroke="#000" stroke-width="0.6"/></svg><div style="position:absolute;left:683px;top:76px;width:1px;height:18px;background:#c4c4c4"></div><svg style="position:absolute;left:689px;top:78px;overflow:visible" width="16" height="16" viewBox="0 0 16 16"><rect x="1" y="1" width="14" height="14" fill="none" stroke="#090" stroke-width="1.6" stroke-dasharray="1.6 1.2"/><rect x="5.5" y="4.5" width="6" height="6" fill="none" stroke="#000"/><path d="M4.5 6.5v5h6" fill="none" stroke="#000"/></svg><div style="position:absolute;left:712px;top:76px;width:1px;height:18px;background:#c4c4c4"></div><svg style="position:absolute;left:719px;top:78px;overflow:visible" width="16" height="16" viewBox="0 0 16 16"><rect x="0.5" y="0.5" width="14" height="14" fill="#c9d4f0" stroke="#000"/></svg><svg style="position:absolute;left:740px;top:83px" width="10" height="6"><path d="M0 0h9l-4.5 5z" fill="#000"/></svg><div style="position:absolute;left:753px;top:73px;width:1px;height:26px;background:#d4d4d4"></div><div style="position:absolute;left:758px;top:76px;width:2px;height:2px;background:#b9b9b9"></div><div style="position:absolute;left:758px;top:79px;width:2px;height:2px;background:#b9b9b9"></div><div style="position:absolute;left:758px;top:82px;width:2px;height:2px;background:#b9b9b9"></div><div style="position:absolute;left:758px;top:85px;width:2px;height:2px;background:#b9b9b9"></div><div style="position:absolute;left:758px;top:88px;width:2px;height:2px;background:#b9b9b9"></div><div style="position:absolute;left:758px;top:91px;width:2px;height:2px;background:#b9b9b9"></div><div style="position:absolute;left:758px;top:94px;width:2px;height:2px;background:#b9b9b9"></div><svg style="position:absolute;left:767px;top:78px;overflow:visible" width="16" height="16" viewBox="0 0 16 16"><text x="0" y="9" font-family="Liberation Sans" font-weight="bold" font-size="11" fill="#000">?</text><rect x="6.5" y="7.5" width="8" height="8" fill="#fff" stroke="#000"/><path d="M6.5 10h8M8.5 12.5h4" stroke="#000"/></svg>
<div style="position:absolute;left:520px;top:99px;width:1393px;height:21px;background:#c0c0c0"></div>
<div class="t" style="left:526px;top:106.3px;font-size:11.5px;line-height:11.5px;font-weight:bold;color:#000;">View 1</div>
<svg style="position:absolute;left:570px;top:106px" width="12" height="8"><path d="M1 1h10l-5 6z" fill="#000"/></svg>
<svg style="position:absolute;left:520px;top:120px" width="1393" height="840" viewBox="520 120 1393 840"><defs><clipPath id="disk"><circle cx="362" cy="688" r="1058.5"/></clipPath></defs><rect x="520" y="120" width="1393" height="840" fill="#fff"/><g clip-path="url(#disk)"><rect x="519" y="119" width="1400" height="842" fill="#0030ff"/><path d="M519.0 60.0 519.0 960.5 1009.0 960.5 1010.5 955.5 1013.0 952.5 1054.5 942.5 1069.0 937.5 1074.5 927.5 1072.0 908.0 1060.5 892.5 1052.0 878.5 1039.0 864.5 1053.5 850.0 1073.5 838.0 1084.0 821.5 1084.0 819.0 1077.5 799.5 1074.0 781.5 1071.0 751.0 1089.5 732.0 1101.5 712.5 1101.5 709.5 1098.5 701.0 1090.5 686.5 1073.5 676.0 1055.5 662.0 1050.5 651.5 1050.5 649.5 1053.5 646.0 1069.5 632.0 1081.0 620.0 1087.5 604.5 1086.5 582.5 1067.0 544.5 1066.0 487.5 1056.0 463.0 1037.5 440.5 1027.0 422.5 1024.5 397.5 1015.5 365.0 999.0 342.0 983.5 324.5 961.5 303.5 938.0 249.5 920.0 225.5 890.5 196.0 870.5 189.5 852.5 187.0 850.0 185.0 846.0 176.5 847.0 151.5 850.5 133.0 848.0 115.5 800.0 115.5 792.5 121.5 774.0 129.5 764.0 127.0 758.0 119.5 756.0 107.0 757.0 104.0 848.0 103.5 848.0 60.0Z" fill="#0099ff"/><path d="M519.0 60.0 519.0 960.5 997.5 960.5 998.5 957.5 1002.5 952.5 1008.0 948.0 1041.5 941.0 1062.0 932.0 1064.5 930.0 1066.5 925.5 1066.0 912.0 1060.5 900.0 1048.0 882.0 1034.5 871.5 1030.5 867.0 1030.5 864.5 1033.5 859.5 1047.5 847.0 1061.5 837.0 1066.5 832.0 1071.5 820.5 1071.5 817.0 1061.0 781.5 1058.0 761.5 1058.5 755.5 1062.5 745.0 1081.0 726.5 1084.5 721.5 1090.0 711.0 1090.0 708.0 1088.5 703.0 1082.5 691.5 1051.5 669.0 1041.5 655.5 1041.5 651.0 1043.0 647.0 1065.0 624.5 1072.0 615.0 1076.0 603.5 1074.5 585.5 1055.0 546.5 1056.5 513.5 1055.5 489.5 1046.0 468.0 1028.0 445.5 1017.5 428.0 1015.5 422.0 1013.0 400.5 1004.5 371.0 986.5 344.0 953.0 306.5 929.5 255.5 911.0 231.0 885.0 206.5 867.0 199.5 849.0 196.0 844.0 192.5 841.0 179.5 844.0 158.0 843.5 151.0 844.5 141.5 844.5 130.0 842.0 123.5 839.5 122.0 822.0 119.5 803.5 121.0 788.0 130.5 776.5 136.5 769.5 137.5 760.5 131.5 754.0 119.5 752.5 106.5 753.5 102.0 756.5 99.0 799.0 80.5 813.0 83.5 827.0 83.0 818.0 60.0Z" fill="#00ffff"/><path d="M519.0 60.0 519.0 960.5 988.0 960.5 988.5 949.0 992.5 946.5 1002.0 943.0 1015.5 942.0 1038.5 937.5 1045.0 935.0 1059.5 924.5 1060.0 913.5 1056.5 902.0 1046.0 887.0 1042.0 883.0 1024.5 872.5 1021.0 868.5 1020.5 866.0 1028.5 855.5 1055.0 834.5 1059.5 826.5 1061.5 817.0 1059.5 808.0 1050.0 782.5 1046.5 762.5 1046.0 753.0 1055.5 739.5 1076.0 719.0 1080.5 711.0 1081.0 708.0 1078.0 699.5 1075.0 695.0 1070.0 690.0 1046.0 673.0 1037.0 664.0 1031.5 655.5 1031.5 652.5 1037.0 643.5 1056.5 623.5 1065.0 609.0 1066.5 598.0 1064.5 588.5 1060.0 577.5 1044.0 548.0 1047.5 500.5 1047.0 492.0 1045.5 487.5 1038.0 473.0 1018.0 447.0 1008.5 430.5 1006.0 422.5 1003.5 404.0 998.0 384.0 994.0 374.0 984.0 357.0 975.0 344.0 954.0 320.5 947.0 311.0 924.0 263.5 907.0 240.0 889.5 222.5 879.0 214.5 864.5 208.0 843.5 202.5 834.5 196.5 836.0 177.0 841.0 160.0 840.0 136.0 839.0 131.5 836.5 128.0 823.5 124.0 816.0 124.0 806.0 126.0 798.0 130.0 780.0 142.0 771.5 146.0 765.0 147.5 761.5 143.5 754.0 130.0 751.0 122.0 749.5 107.5 750.0 101.0 754.5 92.0 780.5 60.0Z" fill="#00f8c0"/><path d="M519.0 60.0 519.0 960.5 984.0 960.5 984.0 945.0 985.5 943.5 1001.0 940.0 1017.0 939.5 1042.5 934.0 1056.5 923.5 1057.5 916.0 1054.5 902.5 1041.0 885.0 1022.0 875.0 1016.5 869.0 1015.5 866.5 1020.5 859.5 1026.5 853.5 1050.0 836.0 1054.0 830.5 1057.0 821.0 1057.0 815.0 1054.5 805.5 1046.5 787.0 1042.0 765.0 1041.0 751.5 1051.0 739.0 1073.0 717.0 1076.5 711.0 1077.0 707.5 1075.5 702.5 1070.5 694.5 1042.5 674.0 1035.0 667.0 1027.5 656.0 1028.0 651.0 1033.0 643.5 1054.5 621.0 1061.5 607.5 1062.5 599.0 1060.5 590.0 1055.5 577.5 1039.5 549.0 1043.0 517.0 1043.5 493.5 1042.5 490.0 1030.5 469.0 1011.5 444.5 1004.5 431.0 1002.5 425.5 999.5 405.5 994.0 385.5 991.0 377.5 973.0 347.5 954.0 326.0 944.5 313.0 922.0 267.5 908.5 247.5 902.0 240.0 886.5 225.0 875.0 217.0 863.0 211.5 841.5 205.5 831.0 198.5 830.0 193.5 834.0 176.0 839.5 160.0 838.0 137.5 837.0 133.5 834.5 130.0 820.0 125.5 806.0 128.5 799.0 132.0 779.0 146.0 770.0 150.5 763.5 152.5 760.5 150.5 750.0 124.5 748.5 118.0 748.0 103.5 751.5 91.0 768.5 60.0Z" fill="#00f868"/><path d="M519.0 60.0 519.0 960.5 980.0 960.5 980.0 941.0 982.0 939.0 996.0 937.5 1014.0 938.0 1041.5 932.5 1054.5 921.0 1055.0 915.5 1052.5 902.0 1041.0 887.5 1019.5 877.0 1012.0 869.0 1012.0 864.5 1023.0 853.0 1047.0 835.5 1051.0 830.5 1053.5 817.5 1052.0 809.0 1042.0 786.5 1037.5 765.5 1036.5 749.0 1071.5 713.5 1073.5 709.5 1073.5 707.0 1068.5 696.5 1057.0 687.0 1034.5 671.0 1025.5 660.0 1023.5 655.0 1024.5 650.0 1027.5 645.5 1051.5 620.5 1058.5 605.5 1058.5 598.5 1052.0 579.0 1041.0 559.0 1035.5 551.5 1036.0 539.0 1039.5 515.0 1040.0 493.5 1039.0 490.5 1026.5 469.5 1008.5 446.5 1000.5 431.0 998.5 424.5 995.5 405.5 990.0 386.0 977.5 361.5 970.5 350.0 950.5 327.0 943.5 317.0 932.0 296.5 919.0 269.0 905.0 248.5 884.5 228.0 872.5 220.0 861.0 214.5 839.0 208.0 834.0 205.5 827.5 200.0 826.5 192.5 838.5 159.0 836.0 137.0 833.0 132.0 821.5 127.5 808.5 130.0 800.5 133.5 783.0 146.5 767.5 155.5 761.0 156.5 758.0 154.5 748.0 123.0 747.0 116.5 747.0 100.0 749.5 89.0 760.0 60.0Z" fill="#50ff00"/><path d="M519.0 60.0 519.0 960.5 975.0 960.5 974.5 937.0 977.5 933.0 1015.0 935.5 1039.5 931.0 1051.5 919.5 1050.5 903.0 1039.5 889.5 1018.5 881.0 1007.0 870.5 1007.5 862.5 1016.5 854.0 1044.5 834.0 1047.5 830.5 1048.0 812.5 1037.0 789.0 1031.5 764.0 1030.5 746.5 1044.5 734.5 1068.0 711.0 1069.0 706.0 1064.0 696.5 1032.0 674.0 1021.0 661.5 1018.5 653.0 1022.0 645.5 1048.0 619.5 1053.5 606.5 1054.0 601.5 1047.5 581.0 1037.5 563.0 1030.0 553.5 1031.0 537.0 1035.0 513.0 1035.0 492.5 1023.0 472.5 1004.5 449.0 994.5 428.5 990.5 406.0 984.5 386.0 968.0 354.5 943.5 324.0 928.5 298.5 916.0 272.5 900.5 250.0 881.5 231.5 871.5 225.0 859.0 218.5 834.0 210.5 823.5 203.0 821.5 193.0 827.5 182.0 837.0 158.5 833.5 137.0 830.5 134.0 819.0 129.5 804.0 134.5 780.5 152.5 769.0 160.0 759.0 161.5 752.5 155.5 750.5 140.0 745.5 119.5 745.5 96.5 751.5 60.0Z" fill="#b4ff00"/><path d="M519.0 60.0 519.0 960.5 969.0 960.5 967.5 948.0 967.5 932.5 975.5 925.0 1012.0 932.0 1038.0 928.5 1047.5 917.5 1047.5 903.5 1038.0 892.5 1018.0 886.0 1000.5 873.5 1002.0 859.5 1004.5 856.5 1043.5 829.5 1041.5 812.5 1030.5 792.0 1024.5 768.0 1022.5 743.0 1042.5 728.5 1063.5 706.5 1060.0 699.0 1050.5 691.5 1029.0 678.0 1016.0 664.5 1012.0 654.0 1017.0 643.0 1031.0 631.0 1043.5 618.0 1048.0 603.0 1040.0 580.5 1031.5 566.0 1022.5 555.5 1024.5 533.5 1028.5 514.5 1029.5 495.0 1018.0 476.0 999.5 453.0 989.0 432.0 984.5 409.5 978.0 388.0 962.5 357.0 941.5 331.0 923.5 301.0 911.0 275.5 897.0 255.0 878.0 236.5 857.0 224.0 832.5 216.0 818.0 206.5 816.0 191.0 824.0 180.0 835.0 157.5 831.5 141.5 829.0 137.5 820.0 132.5 805.0 137.5 774.0 163.5 763.5 167.5 756.5 168.5 747.0 158.5 746.5 139.5 743.0 121.0 743.0 60.0Z" fill="#ffff00"/><path d="M519.0 60.0 519.0 960.5 961.5 960.5 959.0 930.0 962.0 923.5 966.0 920.5 971.0 918.5 977.5 918.5 1016.0 924.5 1025.0 924.5 1034.0 921.5 1038.5 915.0 1038.5 906.0 1036.0 901.5 1032.0 898.5 1011.0 890.0 994.5 880.5 989.0 874.0 986.0 863.0 986.5 857.0 989.5 852.5 994.0 848.0 1019.0 830.0 1025.5 822.0 1025.5 817.5 1019.0 797.5 1011.0 748.0 1011.0 742.0 1012.5 737.0 1017.0 733.0 1036.0 722.0 1050.5 706.0 1050.0 703.0 1047.0 698.5 1023.0 682.5 1008.0 669.0 1004.5 663.5 1002.5 655.0 1003.5 649.5 1009.0 639.0 1024.5 625.0 1028.0 619.0 1032.5 607.0 1032.0 599.5 1026.0 584.5 1020.5 574.0 1011.0 561.5 1008.5 554.5 1008.0 540.5 1010.0 530.0 1016.0 510.0 1015.0 498.0 1005.5 483.0 988.5 461.0 979.5 446.0 973.0 429.0 967.0 396.0 957.0 372.5 950.5 362.5 931.0 339.0 916.5 318.0 884.0 264.5 872.5 250.5 867.5 246.0 851.5 237.0 825.0 226.0 813.5 219.5 809.5 215.0 806.5 206.0 806.5 188.0 816.0 174.5 825.0 158.5 825.5 153.5 823.5 144.0 818.0 140.5 806.5 140.5 797.5 146.5 783.5 162.5 774.5 168.5 760.0 174.5 750.5 175.5 741.5 172.0 736.0 166.5 732.5 153.5 730.5 129.5 724.0 113.0 719.0 105.0 705.0 92.0 705.0 60.0Z" fill="#ffa800"/><path d="M519.0 60.0 519.0 960.5 955.5 960.5 952.5 926.5 956.0 917.5 957.5 916.0 966.5 913.0 972.5 913.0 1007.0 916.5 1025.0 919.5 1031.5 916.0 1032.0 907.0 1031.0 905.0 1011.5 895.0 998.5 890.5 984.5 882.5 974.5 867.5 973.0 863.5 975.0 850.0 1012.5 821.0 1010.0 805.0 1008.0 777.0 1001.5 745.5 1005.5 730.5 1030.5 717.5 1041.5 705.0 1042.5 702.5 1031.5 694.0 1012.0 682.0 997.0 667.5 995.0 651.5 1003.5 634.5 1018.5 621.5 1021.5 603.0 1011.5 579.5 999.5 562.0 995.0 543.5 999.0 526.0 1006.0 507.5 1003.5 499.0 987.0 477.5 969.5 452.0 961.0 429.0 957.0 397.5 949.5 378.5 946.5 373.5 925.0 348.0 901.0 316.5 891.0 302.0 881.0 283.0 862.5 255.5 803.5 225.0 798.5 209.0 798.0 196.5 799.5 184.5 818.5 156.0 818.5 150.5 816.5 146.0 808.5 142.5 805.0 144.0 797.0 149.5 787.0 165.0 754.0 182.0 737.5 182.0 726.5 172.5 721.0 153.5 720.0 134.0 713.0 124.0 687.5 123.5 674.5 118.0 674.0 60.0Z" fill="#ff4800"/><path d="M1031 946h2v3h-2zM941 270h5v2h-5zM1061 520h4v3h-4zM1091 707h2v3h-2zM930 254h3v2h-3zM1089 720h2v3h-2zM1047 942h4v3h-4zM1079 585h4v2h-4zM1069 748h3v2h-3zM760 122h3v2h-3zM1068 549h5v2h-5zM1051 657h5v3h-5zM1094 711h3v3h-3zM1048 459h3v3h-3zM1070 678h4v2h-4zM1067 508h5v3h-5zM1058 636h2v3h-2zM1008 954h2v2h-2zM970 321h3v3h-3zM1016 416h4v3h-4zM1063 778h2v3h-2zM1057 532h2v2h-2zM886 197h2v3h-2zM1074 562h3v3h-3zM1009 377h4v3h-4zM1063 778h4v3h-4zM1047 656h2v3h-2zM1029 446h2v3h-2zM1085 721h3v3h-3zM1083 735h5v2h-5zM1069 933h5v2h-5zM1032 868h3v3h-3zM942 280h5v2h-5zM880 204h5v2h-5zM1091 715h3v3h-3zM1076 610h4v3h-4zM1040 454h3v2h-3zM1027 424h2v2h-2zM1053 460h4v3h-4zM1069 785h2v2h-2zM988 332h4v2h-4zM850 191h5v3h-5zM1091 690h5v2h-5zM1070 621h3v3h-3zM1019 410h2v2h-2zM1018 393h5v2h-5zM1025 409h5v3h-5zM1053 459h5v2h-5zM1060 938h4v2h-4zM878 202h4v2h-4zM1065 771h3v2h-3zM1068 547h2v3h-2zM993 350h3v2h-3zM1043 875h4v2h-4zM1072 739h3v2h-3zM1090 707h4v3h-4zM799 122h4v2h-4zM1064 786h3v3h-3zM1086 583h5v3h-5zM1063 670h2v2h-2zM1041 862h3v2h-3zM1066 841h2v2h-2zM999 343h5v3h-5zM1052 647h3v3h-3zM901 213h3v3h-3zM1022 395h2v2h-2zM1074 622h4v3h-4zM760 129h3v2h-3zM1057 889h2v3h-2zM1011 951h2v2h-2zM1044 943h3v3h-3zM999 959h4v2h-4zM1013 388h4v3h-4zM1075 800h5v3h-5zM1088 729h5v2h-5zM918 226h5v3h-5zM1057 509h5v3h-5zM1069 788h3v3h-3zM1033 442h4v3h-4zM1060 671h3v3h-3zM1071 752h3v3h-3zM842 182h2v2h-2zM869 196h5v3h-5zM942 271h2v2h-2zM1074 820h2v3h-2zM1005 354h3v2h-3zM1002 959h4v3h-4zM910 224h3v2h-3zM1020 394h3v3h-3zM928 247h4v2h-4zM1078 812h2v3h-2zM1013 369h2v3h-2zM910 218h4v3h-4zM891 206h4v2h-4zM899 219h5v2h-5zM847 123h3v3h-3zM1054 888h5v2h-5zM1075 566h2v3h-2zM1075 617h2v3h-2zM847 178h4v2h-4zM1052 458h2v2h-2zM1012 379h2v3h-2zM788 129h2v2h-2zM847 165h3v2h-3zM1082 604h3v3h-3zM1057 476h4v3h-4zM938 249h5v2h-5zM1038 944h3v3h-3zM1052 881h2v2h-2zM1057 506h4v3h-4zM1002 960h2v2h-2zM1071 831h3v2h-3zM1020 425h3v3h-3zM938 262h3v3h-3zM969 317h2v3h-2zM1073 770h4v2h-4zM906 217h4v3h-4zM1065 505h4v3h-4zM1079 577h5v3h-5zM933 247h3v3h-3zM1058 481h4v2h-4zM1064 677h3v2h-3zM1076 814h2v2h-2zM1047 469h5v3h-5zM1016 377h4v2h-4zM1067 789h5v2h-5zM1014 391h5v3h-5zM1009 953h5v3h-5zM1064 903h2v2h-2zM807 120h2v3h-2zM1026 411h2v3h-2zM1031 867h3v3h-3zM1068 831h4v2h-4zM904 224h3v3h-3zM1078 830h4v2h-4zM1014 405h5v3h-5zM904 214h2v2h-2zM949 280h4v2h-4zM908 219h2v2h-2zM845 176h2v2h-2zM1046 454h4v2h-4zM1077 799h4v3h-4zM1006 370h3v2h-3zM1057 543h3v2h-3zM1036 870h5v2h-5zM1078 799h3v3h-3zM1050 943h2v3h-2zM1008 355h2v2h-2zM1065 902h2v2h-2zM1082 582h5v3h-5zM1079 825h2v3h-2zM1084 608h5v3h-5zM938 255h2v3h-2zM1033 945h3v2h-3zM1059 892h4v2h-4zM996 341h3v3h-3zM1002 356h3v3h-3zM1081 594h2v3h-2zM1059 756h3v3h-3zM1082 683h2v2h-2zM1074 615h2v2h-2zM1082 590h5v3h-5zM1053 465h3v2h-3zM1064 674h3v2h-3zM1062 518h4v3h-4zM1040 943h5v3h-5zM1065 836h3v2h-3zM1043 854h3v3h-3zM848 145h4v2h-4zM1010 520h3v2h-3zM1007 917h3v2h-3zM1009 921h3v2h-3zM1023 591h5v2h-5zM1007 749h4v2h-4zM820 233h4v3h-4zM881 285h3v2h-3zM1004 497h4v2h-4zM1000 653h3v3h-3zM1015 920h2v2h-2zM1004 548h3v2h-3zM1020 626h4v2h-4zM902 308h2v3h-2zM880 279h4v3h-4zM1022 725h2v3h-2zM1000 661h2v3h-2zM789 160h2v2h-2zM1004 515h5v3h-5zM1007 736h2v2h-2zM869 266h5v3h-5zM1001 891h4v3h-4zM1008 763h4v3h-4zM750 178h2v2h-2zM983 879h2v2h-2zM714 125h2v2h-2zM983 856h3v2h-3zM923 337h5v3h-5zM1011 777h3v3h-3zM887 276h5v3h-5zM815 161h4v3h-4zM983 857h2v3h-2zM967 411h2v2h-2zM847 242h5v3h-5zM950 372h2v2h-2zM999 484h5v2h-5zM998 833h3v3h-3zM1005 510h2v3h-2zM1008 562h3v3h-3zM1006 526h5v3h-5zM1004 749h5v2h-5zM1013 801h5v3h-5zM716 126h5v3h-5zM988 878h4v3h-4zM955 940h4v3h-4zM992 475h2v3h-2zM857 243h5v3h-5zM1019 816h3v2h-3zM948 368h3v3h-3zM829 236h3v2h-3zM915 334h2v3h-2zM950 369h3v2h-3zM765 176h2v3h-2zM1012 567h3v3h-3zM1005 633h5v3h-5zM991 842h2v3h-2zM1009 738h5v3h-5zM1021 622h3v2h-3zM882 276h2v2h-2zM1003 533h4v3h-4zM1025 607h3v3h-3zM835 233h2v3h-2zM727 152h5v2h-5zM1019 682h4v2h-4zM1026 598h3v2h-3zM977 453h4v2h-4zM725 155h5v2h-5zM1001 829h2v3h-2zM806 178h2v2h-2zM984 851h5v3h-5zM961 422h5v2h-5zM1002 556h4v2h-4zM916 324h5v2h-5zM1028 900h2v3h-2zM1042 697h3v2h-3zM723 132h4v2h-4zM962 407h4v3h-4zM985 475h3v2h-3zM1003 515h2v3h-2zM918 337h3v2h-3zM957 325h5v3h-5zM1035 680h2v3h-2zM968 373h5v2h-5zM976 922h4v2h-4zM823 144h2v3h-2zM853 227h3v3h-3zM1021 531h2v2h-2zM1041 482h4v2h-4zM1002 461h4v2h-4zM1018 845h2v2h-2zM857 233h3v2h-3zM1035 514h5v2h-5zM769 162h2v3h-2zM935 273h4v3h-4zM796 129h5v3h-5zM1002 403h4v2h-4zM1015 529h2v3h-2zM848 217h5v3h-5zM1029 843h4v2h-4zM1024 791h4v3h-4zM1047 717h3v2h-3zM1050 689h4v3h-4zM923 316h3v2h-3zM896 255h2v2h-2zM966 920h2v3h-2zM1037 733h2v3h-2zM969 938h2v2h-2zM1015 892h2v3h-2zM1073 708h4v3h-4zM897 232h4v2h-4zM1031 611h4v2h-4zM994 425h5v2h-5zM767 157h2v2h-2zM1030 873h3v3h-3zM1014 884h2v2h-2zM998 443h3v2h-3zM1013 655h2v3h-2zM1030 941h2v3h-2zM1049 598h2v2h-2zM1060 610h3v3h-3zM990 931h5v2h-5zM1054 771h3v3h-3zM1068 726h4v2h-4zM1059 924h2v3h-2zM1012 647h3v2h-3zM898 225h3v3h-3zM1016 762h2v3h-2zM1072 598h3v3h-3zM1013 524h4v3h-4zM947 344h5v2h-5zM730 128h2v3h-2zM1002 651h5v3h-5zM744 128h4v3h-4zM836 123h4v2h-4zM940 279h2v2h-2zM987 363h5v2h-5zM1032 483h3v3h-3zM1032 792h4v2h-4zM1056 589h4v2h-4zM895 245h5v3h-5zM929 326h4v3h-4zM811 183h5v2h-5zM777 158h2v2h-2zM1061 602h4v2h-4zM985 947h4v2h-4zM1029 844h4v3h-4zM1038 688h4v3h-4zM1064 724h4v2h-4zM821 193h3v3h-3zM1035 641h4v2h-4zM884 207h2v3h-2zM1021 879h3v3h-3zM1061 579h3v3h-3zM1030 678h2v2h-2zM998 929h4v3h-4zM1066 707h4v3h-4zM913 268h2v3h-2zM1046 791h3v3h-3zM1023 930h2v2h-2zM1025 869h4v3h-4zM749 141h2v2h-2zM886 255h2v3h-2zM977 355h3v3h-3zM1073 596h3v3h-3zM864 199h2v3h-2zM1024 939h5v3h-5zM1026 853h2v2h-2zM836 192h4v2h-4zM996 441h2v3h-2zM1042 827h4v3h-4zM847 231h3v2h-3zM950 349h3v3h-3zM1002 395h3v2h-3zM1037 476h4v3h-4zM1047 558h4v3h-4zM897 276h4v3h-4zM1055 546h3v2h-3zM806 192h2v2h-2zM1033 569h3v3h-3zM1024 673h3v3h-3zM1021 559h4v3h-4zM1014 761h3v2h-3zM1002 924h3v3h-3zM740 135h2v3h-2zM731 156h4v2h-4zM984 403h2v2h-2zM1041 550h4v2h-4zM969 414h4v3h-4zM1032 640h4v2h-4zM837 155h2v2h-2zM1063 604h3v3h-3zM1019 552h5v2h-5zM1038 528h2v2h-2zM914 307h4v2h-4zM1050 823h3v2h-3zM747 160h4v3h-4zM969 387h3v2h-3zM1041 825h2v3h-2zM838 209h4v3h-4zM1043 929h2v3h-2zM883 243h5v3h-5zM984 411h5v2h-5zM754 130h3v2h-3zM990 859h4v2h-4zM758 167h4v3h-4zM1065 585h5v3h-5zM971 947h2v2h-2zM886 248h3v3h-3zM987 945h3v2h-3zM975 921h5v3h-5zM766 162h4v2h-4zM833 199h3v2h-3zM967 928h2v3h-2zM751 168h4v2h-4zM893 232h3v2h-3zM1019 526h2v3h-2zM995 443h4v3h-4zM827 158h3v2h-3zM818 177h3v2h-3zM1049 924h3v3h-3z" fill="#b4b4b4"/><path d="M515.0 688.0L1420.5 688.0M515.0 689.5L1420.4 698.4M515.0 691.0L1420.3 708.8M514.9 692.5L1420.0 719.2M514.9 694.0L1419.7 729.6M514.8 695.5L1419.2 739.9M514.7 697.0L1418.7 750.3M514.6 698.5L1418.0 760.7M514.5 700.0L1417.2 771.0M514.4 701.5L1416.4 781.4M514.2 703.0L1415.4 791.8M518.9 705.0L1414.3 802.1M518.7 706.5L1413.2 812.4M518.5 708.1L1411.9 822.7M518.3 709.6L1410.5 833.0M518.1 711.2L1409.0 843.3M517.9 712.7L1407.5 853.6M517.6 714.2L1405.8 863.8M517.3 715.7L1404.0 874.1M517.1 717.3L1402.1 884.3M516.8 718.8L1400.2 894.5M516.5 720.3L1398.1 904.7M516.1 721.8L1395.9 914.8M515.8 723.3L1393.6 925.0M515.4 724.8L1391.3 935.1M515.1 726.3L1388.8 945.2M514.7 727.8L1386.2 955.3M518.9 730.6L1369.6 961.5M518.5 732.1L1334.4 962.2M518.1 733.7L1299.3 962.3M517.6 735.2L1264.3 961.7M517.1 736.7L1234.0 961.9M516.7 738.3L1203.8 961.5M516.2 739.8L1178.2 962.1M515.6 741.3L1152.7 962.2M515.1 742.8L1127.3 961.8M514.6 744.3L1102.0 961.0M518.5 747.5L1081.3 961.4M517.9 749.0L1060.6 961.4M517.3 750.6L1040.0 961.1M516.7 752.1L1024.0 962.2M516.1 753.6L1003.5 961.1M515.4 755.1L987.6 961.6M514.7 756.6L971.7 961.8M518.4 760.1L955.8 961.8M517.7 761.6L940.1 961.4M517.0 763.2L928.7 962.9M516.2 764.7L913.0 962.0M515.5 766.2L901.7 963.0M519.0 769.9L886.2 961.6M518.2 771.5L875.0 962.2M517.3 773.0L863.8 962.6M516.5 774.5L852.7 962.8M515.6 776.0L841.6 962.8M518.9 780.0L830.6 962.6M518.0 781.5L819.6 962.3M517.1 783.0L808.7 961.7M516.1 784.6L801.9 963.5M515.2 786.1L791.0 962.6M518.2 790.2L780.3 961.6M517.2 791.7L773.5 963.0M516.2 793.2L762.9 961.6M515.2 794.8L756.2 962.7M518.0 799.0L745.6 961.0M516.9 800.6L739.1 961.9M515.8 802.1L732.5 962.8M518.5 806.5L725.9 963.5M517.4 808.0L715.6 961.1M516.2 809.5L709.1 961.6M518.7 814.1L702.6 962.0M517.5 815.6L696.2 962.3M516.2 817.1L689.8 962.5M518.6 821.8L683.4 962.5M517.3 823.3L677.1 962.5M516.0 824.8L670.8 962.4M518.2 829.6L664.5 962.2M516.8 831.1L658.3 961.9M518.9 835.9L652.1 961.4M517.4 837.4L649.4 964.3M515.9 838.9L643.2 963.7M517.9 843.9L637.1 963.1M516.3 845.4L631.0 962.3M518.1 850.4L624.9 961.5M516.5 851.9L622.2 964.0M518.2 856.9L616.2 963.0M516.5 858.5L610.3 962.0M518.0 863.6L607.6 964.4M516.3 865.1L601.7 963.1M517.7 870.3L595.9 961.8M519.0 875.5L593.2 964.1M517.1 877.0L587.4 962.6M518.3 882.3L581.7 961.1M516.3 883.8L579.0 963.2M517.4 889.1L573.3 961.5M518.3 894.5L570.6 963.6M516.3 896.0L565.0 961.8M517.0 901.4L562.3 963.7M517.7 906.8L556.8 961.8M518.3 912.3L554.1 963.7M518.8 917.8L548.7 961.6M516.6 919.3L546.0 963.4M516.9 924.9L540.7 961.1M517.2 930.4L538.0 962.9M517.4 936.0L535.3 964.6M517.4 941.6L530.0 962.2M517.4 947.3L527.3 963.8M517.3 953.0L522.2 961.3M518.6 132.8L522.5 118.9M518.6 152.9L529.4 115.9M518.3 172.9L535.0 117.6M519.0 188.2L542.1 114.7M517.9 208.1L547.7 116.5M518.0 223.4L553.3 118.3M517.9 238.6L560.5 115.7M517.4 253.7L566.1 117.7M518.3 264.3L573.3 115.2M517.3 279.4L578.9 117.3M517.8 289.9L586.3 115.0M518.1 300.4L591.9 117.2M518.2 310.8L599.3 115.0M518.2 321.2L605.0 117.4M517.9 331.6L612.5 115.4M517.4 341.9L618.1 117.9M518.8 347.9L625.7 116.0M518.0 358.1L631.3 118.6M517.0 368.3L639.0 117.0M518.0 374.2L646.7 115.4M518.9 380.0L652.3 118.2M517.5 390.1L660.1 116.8M518.1 395.9L668.0 115.6M518.7 401.7L673.6 118.6M516.8 411.6L681.5 117.5M517.1 417.4L689.5 116.5M517.3 423.0L697.5 115.5M517.4 428.7L703.1 118.9M517.4 434.4L711.2 118.1M517.4 440.0L719.4 117.5M517.2 445.6L727.5 117.0M516.9 451.1L735.8 116.6M516.6 456.7L744.0 116.3M518.8 458.2L752.3 116.1M518.3 463.7L760.7 116.0M517.7 469.2L769.1 116.0M517.0 474.6L777.5 116.1M516.3 480.0L786.0 116.4M518.3 481.5L794.5 116.7M517.4 486.9L803.0 117.2M516.3 492.2L811.6 117.7M518.3 493.7L820.2 118.4M517.1 499.0L831.8 115.5M519.0 500.5L840.5 116.5M517.7 505.7L849.2 117.5M516.3 510.9L858.0 118.7M518.0 512.4L869.9 116.4M516.5 517.5L878.8 117.8M518.2 519.1L890.9 115.9M516.5 524.1L899.8 117.6M518.1 525.6L912.0 115.9M516.3 530.6L921.0 117.9M517.9 532.1L933.4 116.6M515.9 537.1L942.4 118.9M517.4 538.6L954.9 117.9M518.9 540.1L967.5 117.2M516.8 544.9L980.1 116.6M518.2 546.4L992.8 116.2M516.0 551.2L1005.6 116.1M517.3 552.7L1018.5 116.1M518.6 554.2L1031.4 116.3M516.2 558.9L1044.3 116.7M517.5 560.4L1057.4 117.3M518.7 561.9L1070.4 118.1M516.2 566.5L1087.3 116.2M517.4 568.0L1100.5 117.4M518.5 569.5L1113.8 118.9M515.8 573.9L1131.0 117.7M516.9 575.4L1148.2 116.8M518.0 577.0L1161.6 118.9M515.2 581.2L1179.0 118.6M516.2 582.8L1196.5 118.5M517.2 584.3L1214.1 118.7M518.2 585.8L1235.7 116.5M515.2 589.9L1253.5 117.3M516.1 591.4L1259.0 126.1M517.1 593.0L1264.5 134.9M518.0 594.5L1269.9 143.8M518.9 596.0L1275.2 152.8M515.6 600.0L1280.4 161.8M516.5 601.5L1285.5 170.8M517.3 603.0L1290.6 179.9M518.2 604.5L1295.5 189.0M519.0 606.1L1300.4 198.2M515.5 609.8L1305.1 207.5M516.2 611.3L1309.8 216.7M517.0 612.8L1314.4 226.1M517.7 614.4L1318.9 235.4M518.4 615.9L1323.3 244.8M514.7 619.4L1327.6 254.3M515.4 620.9L1331.8 263.8M516.1 622.4L1335.9 273.3M516.7 623.9L1339.9 282.9M517.3 625.4L1343.9 292.5M517.9 627.0L1347.7 302.2M518.5 628.5L1351.4 311.9M514.6 631.7L1355.1 321.6M515.1 633.2L1358.6 331.4M515.6 634.7L1362.1 341.2M516.2 636.2L1365.4 351.0M516.7 637.7L1368.7 360.9M517.1 639.3L1371.9 370.8M517.6 640.8L1374.9 380.7M518.1 642.3L1377.9 390.7M518.5 643.9L1380.8 400.7M518.9 645.4L1383.5 410.7M514.7 648.2L1386.2 420.7M515.1 649.7L1388.8 430.8M515.4 651.2L1391.3 440.9M515.8 652.7L1393.6 451.0M516.1 654.2L1395.9 461.2M516.5 655.7L1398.1 471.3M516.8 657.2L1400.2 481.5M517.1 658.7L1402.1 491.7M517.3 660.3L1404.0 501.9M517.6 661.8L1405.8 512.2M517.9 663.3L1407.5 522.4M518.1 664.8L1409.0 532.7M518.3 666.4L1410.5 543.0M518.5 667.9L1411.9 553.3M518.7 669.5L1413.2 563.6M518.9 671.0L1414.3 573.9M514.2 673.0L1415.4 584.2M514.4 674.5L1416.4 594.6M514.5 676.0L1417.2 605.0M514.6 677.5L1418.0 615.3M514.7 679.0L1418.7 625.7M514.8 680.5L1419.2 636.1M514.9 682.0L1419.7 646.4M514.9 683.5L1420.0 656.8M515.0 685.0L1420.3 667.2M515.0 686.5L1420.4 677.6" stroke="#fff" stroke-width="1" fill="none" shape-rendering="crispEdges"/><g fill="none" stroke="#fff" stroke-width="1" shape-rendering="crispEdges"><circle cx="362" cy="688" r="1058.5"/><circle cx="362" cy="688" r="1048.0"/><circle cx="362" cy="688" r="1037.5"/><circle cx="362" cy="688" r="1027.0"/><circle cx="362" cy="688" r="1016.5"/><circle cx="362" cy="688" r="1006.0"/><circle cx="362" cy="688" r="995.5"/><circle cx="362" cy="688" r="985.0"/><circle cx="362" cy="688" r="974.5"/><circle cx="362" cy="688" r="964.0"/><circle cx="362" cy="688" r="953.5"/><circle cx="362" cy="688" r="943.0"/><circle cx="362" cy="688" r="932.5"/><circle cx="362" cy="688" r="922.0"/><circle cx="362" cy="688" r="911.5"/><circle cx="362" cy="688" r="901.0"/><circle cx="362" cy="688" r="890.5"/><circle cx="362" cy="688" r="880.0"/><circle cx="362" cy="688" r="869.5"/><circle cx="362" cy="688" r="859.0"/><circle cx="362" cy="688" r="848.5"/><circle cx="362" cy="688" r="838.0"/><circle cx="362" cy="688" r="827.5"/><circle cx="362" cy="688" r="817.0"/><circle cx="362" cy="688" r="806.5"/><circle cx="362" cy="688" r="796.0"/><circle cx="362" cy="688" r="785.5"/><circle cx="362" cy="688" r="775.0"/><circle cx="362" cy="688" r="764.5"/><circle cx="362" cy="688" r="754.0"/><circle cx="362" cy="688" r="743.5"/><circle cx="362" cy="688" r="733.0"/><circle cx="362" cy="688" r="722.5"/><circle cx="362" cy="688" r="712.0"/><circle cx="362" cy="688" r="701.5"/><circle cx="362" cy="688" r="691.0"/><circle cx="362" cy="688" r="680.5"/><circle cx="362" cy="688" r="670.0"/><circle cx="362" cy="688" r="659.5"/><circle cx="362" cy="688" r="649.0"/><circle cx="362" cy="688" r="638.5"/><circle cx="362" cy="688" r="628.0"/><circle cx="362" cy="688" r="617.5"/><circle cx="362" cy="688" r="607.0"/><circle cx="362" cy="688" r="596.5"/><circle cx="362" cy="688" r="586.0"/><circle cx="362" cy="688" r="575.5"/><circle cx="362" cy="688" r="565.0"/><circle cx="362" cy="688" r="554.5"/><circle cx="362" cy="688" r="544.0"/><circle cx="362" cy="688" r="533.5"/><circle cx="362" cy="688" r="523.0"/><circle cx="362" cy="688" r="512.5"/><circle cx="362" cy="688" r="502.0"/><circle cx="362" cy="688" r="491.5"/><circle cx="362" cy="688" r="481.0"/><circle cx="362" cy="688" r="470.5"/><circle cx="362" cy="688" r="460.0"/><circle cx="362" cy="688" r="449.5"/><circle cx="362" cy="688" r="439.0"/><circle cx="362" cy="688" r="428.5"/><circle cx="362" cy="688" r="418.0"/><circle cx="362" cy="688" r="407.5"/><circle cx="362" cy="688" r="397.0"/><circle cx="362" cy="688" r="386.5"/><circle cx="362" cy="688" r="376.0"/><circle cx="362" cy="688" r="365.5"/><circle cx="362" cy="688" r="355.0"/><circle cx="362" cy="688" r="344.5"/><circle cx="362" cy="688" r="334.0"/><circle cx="362" cy="688" r="323.5"/><circle cx="362" cy="688" r="313.0"/><circle cx="362" cy="688" r="302.5"/><circle cx="362" cy="688" r="292.0"/><circle cx="362" cy="688" r="281.5"/><circle cx="362" cy="688" r="271.0"/><circle cx="362" cy="688" r="260.5"/><circle cx="362" cy="688" r="250.0"/><circle cx="362" cy="688" r="239.5"/><circle cx="362" cy="688" r="229.0"/><circle cx="362" cy="688" r="218.5"/><circle cx="362" cy="688" r="208.0"/><circle cx="362" cy="688" r="197.5"/><circle cx="362" cy="688" r="187.0"/><circle cx="362" cy="688" r="176.5"/><circle cx="362" cy="688" r="166.0"/><circle cx="362" cy="688" r="155.5"/></g></g><rect x="525" y="203.20" width="28" height="38.67" fill="#ff4800"/><rect x="525" y="241.67" width="28" height="38.67" fill="#ffa800"/><rect x="525" y="280.14" width="28" height="38.67" fill="#ffff00"/><rect x="525" y="318.61" width="28" height="38.67" fill="#b4ff00"/><rect x="525" y="357.08" width="28" height="38.67" fill="#50ff00"/><rect x="525" y="395.55" width="28" height="38.67" fill="#00f868"/><rect x="525" y="434.02" width="28" height="38.67" fill="#00f8c0"/><rect x="525" y="472.49" width="28" height="38.67" fill="#00ffff"/><rect x="525" y="510.96" width="28" height="38.67" fill="#0099ff"/><rect x="525" y="549.43" width="28" height="38.67" fill="#0030ff"/><rect x="525.5" y="203.2" width="27" height="384.7" fill="none" stroke="#000" stroke-width="1"/><path d="M552 203.2h4" stroke="#000" stroke-width="1.2"/><text x="566" y="212.5" font-size="20" textLength="56" lengthAdjust="spacingAndGlyphs" font-family="Liberation Sans" fill="#000">1.000</text><path d="M552 241.7h4" stroke="#000" stroke-width="1.2"/><text x="566" y="251.0" font-size="20" textLength="56" lengthAdjust="spacingAndGlyphs" font-family="Liberation Sans" fill="#000">0.900</text><path d="M552 280.1h4" stroke="#000" stroke-width="1.2"/><text x="566" y="289.4" font-size="20" textLength="56" lengthAdjust="spacingAndGlyphs" font-family="Liberation Sans" fill="#000">0.800</text><path d="M552 318.6h4" stroke="#000" stroke-width="1.2"/><text x="566" y="327.9" font-size="20" textLength="56" lengthAdjust="spacingAndGlyphs" font-family="Liberation Sans" fill="#000">0.700</text><path d="M552 357.1h4" stroke="#000" stroke-width="1.2"/><text x="566" y="366.4" font-size="20" textLength="56" lengthAdjust="spacingAndGlyphs" font-family="Liberation Sans" fill="#000">0.600</text><path d="M552 395.5h4" stroke="#000" stroke-width="1.2"/><text x="566" y="404.8" font-size="20" textLength="56" lengthAdjust="spacingAndGlyphs" font-family="Liberation Sans" fill="#000">0.500</text><path d="M552 434.0h4" stroke="#000" stroke-width="1.2"/><text x="566" y="443.3" font-size="20" textLength="56" lengthAdjust="spacingAndGlyphs" font-family="Liberation Sans" fill="#000">0.400</text><path d="M552 472.5h4" stroke="#000" stroke-width="1.2"/><text x="566" y="481.8" font-size="20" textLength="56" lengthAdjust="spacingAndGlyphs" font-family="Liberation Sans" fill="#000">0.300</text><path d="M552 511.0h4" stroke="#000" stroke-width="1.2"/><text x="566" y="520.3" font-size="20" textLength="56" lengthAdjust="spacingAndGlyphs" font-family="Liberation Sans" fill="#000">0.200</text><path d="M552 549.4h4" stroke="#000" stroke-width="1.2"/><text x="566" y="558.7" font-size="20" textLength="56" lengthAdjust="spacingAndGlyphs" font-family="Liberation Sans" fill="#000">0.100</text><path d="M552 587.9h4" stroke="#000" stroke-width="1.2"/><text x="566" y="597.2" font-size="20" textLength="56" lengthAdjust="spacingAndGlyphs" font-family="Liberation Sans" fill="#000">0.000</text><text x="526" y="166.5" font-size="21.5" textLength="316" lengthAdjust="spacingAndGlyphs" font-family="Liberation Sans" fill="#000">Fluido Invasor.Volume Fraction</text><text x="526" y="185.8" font-size="18.5" textLength="87" lengthAdjust="spacingAndGlyphs" font-family="Liberation Sans" fill="#000">Contour 1</text><g font-family="Liberation Sans" font-size="12" fill="#000"><text x="1005" y="936">0</text><text x="1201" y="936" textLength="32" lengthAdjust="spacingAndGlyphs">0.200</text><text x="1394" y="936" textLength="32" lengthAdjust="spacingAndGlyphs">0.400</text><text x="1434" y="936" textLength="21" lengthAdjust="spacingAndGlyphs">(m)</text><text x="1096" y="966" textLength="33" lengthAdjust="spacingAndGlyphs">0.100</text><text x="1304" y="966" textLength="33" lengthAdjust="spacingAndGlyphs">0.300</text></g><rect x="1008.5" y="942.5" width="416" height="10" fill="none" stroke="#000"/><rect x="1008" y="942" width="104" height="11" fill="#000"/><rect x="1216" y="942" width="104.5" height="11" fill="#000"/><path d="M1816 905.5L1772 894" stroke="#0a0" stroke-width="3"/><path d="M1758 892L1773 889L1771 901z" fill="#070"/><text x="1744" y="896" font-family="Liberation Sans" font-size="17" font-weight="bold" textLength="9" lengthAdjust="spacingAndGlyphs" fill="#008f00">Y</text><path d="M1816 906L1806 950" stroke="#e00" stroke-width="3"/><path d="M1800 948L1812 950L1805 962z" fill="#a00"/><circle cx="1816" cy="902" r="4.5" fill="#00f"/><text x="1812" y="905" font-family="Liberation Sans" font-size="14" font-weight="bold" textLength="10" lengthAdjust="spacingAndGlyphs" fill="#00f">Z</text><circle cx="1780" cy="925" r="6" fill="#0ee"/></svg>

</body></html>
